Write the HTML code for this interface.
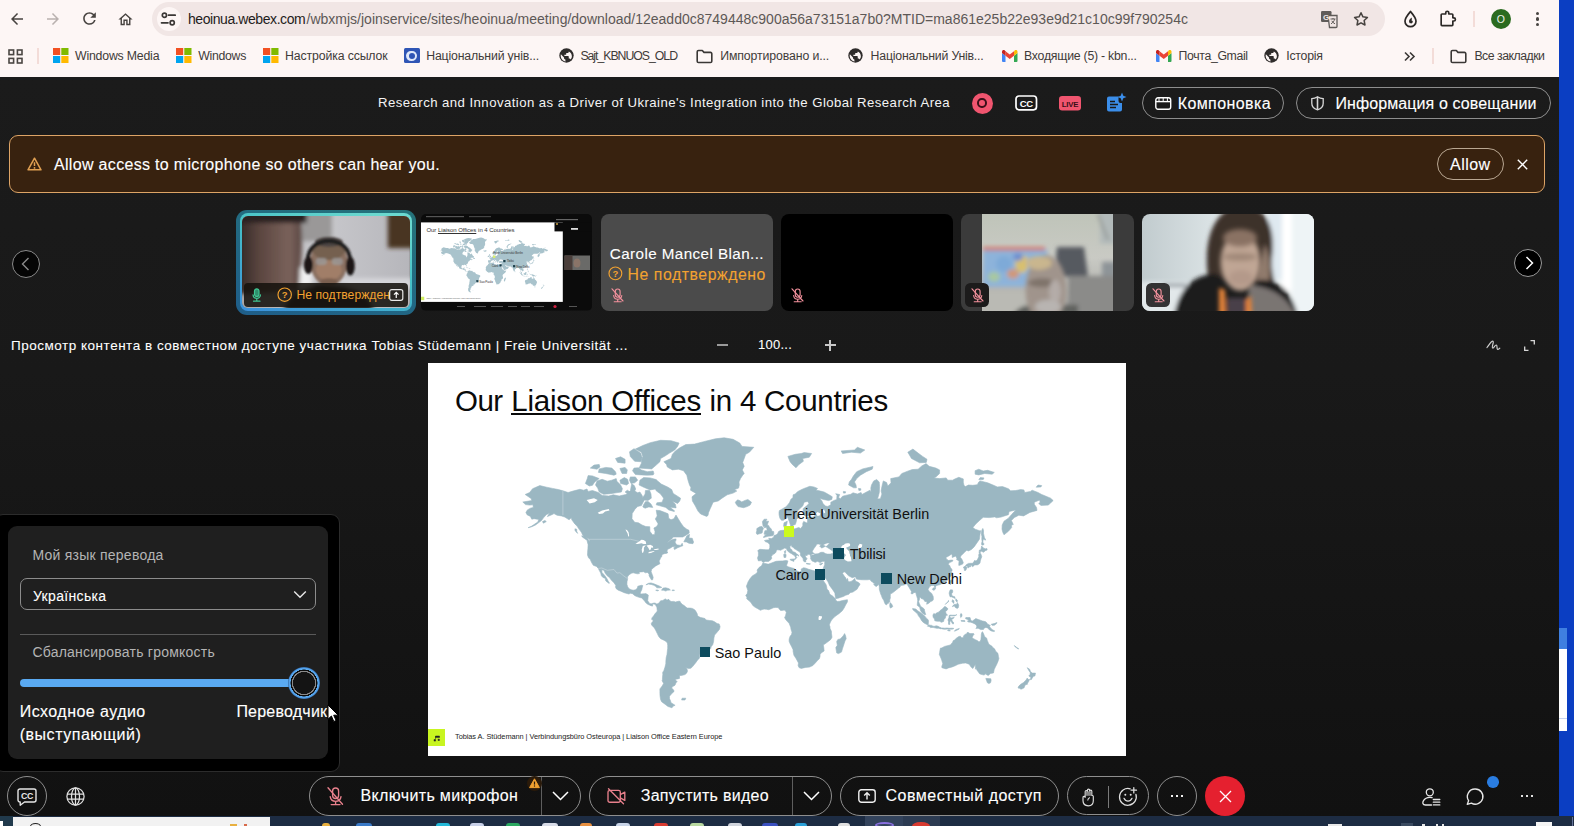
<!DOCTYPE html><html lang="ru"><head><meta charset="utf-8"><title>Webex</title><style>
*{box-sizing:border-box;margin:0;padding:0}
html,body{width:1574px;height:826px;overflow:hidden;background:#0a3bbd;font-family:"Liberation Sans",sans-serif;}
.abs{position:absolute}
.t{position:absolute;white-space:nowrap;display:block}
#root{position:absolute;left:0;top:0;width:1574px;height:826px;overflow:hidden}
svg{position:absolute;overflow:visible}
</style></head><body><div id="root"><div class="abs" style="left:1559px;top:0;width:15px;height:826px;background:#0b3ec2"></div><div class="abs" style="left:1559px;top:628px;width:8px;height:103px;background:#fff"></div><div class="abs" style="left:1559px;top:628px;width:8px;height:21px;background:#3f7fe0"></div><div class="abs" style="left:1559px;top:718px;width:8px;height:1px;background:#c8d4f0"></div><div class="abs" style="left:0;top:0;width:1559px;height:77px;background:#fdf6f5"></div><svg style="left:8.4px;top:10.0px" width="18" height="18" viewBox="0 0 24 24"><path d="M20 11H7.83l5.59-5.59L12 4l-8 8 8 8 1.41-1.41L7.83 13H20v-2z" fill="#474340" /></svg><svg style="left:44.0px;top:10.0px" width="18" height="18" viewBox="0 0 24 24"><path d="M12 4l-1.41 1.41L16.17 11H4v2h12.17l-5.58 5.59L12 20l8-8z" fill="#b9b1af" /></svg><svg style="left:79.5px;top:9.3px" width="19" height="19" viewBox="0 0 24 24"><path d="M17.65 6.35A7.958 7.958 0 0012 4c-4.42 0-7.99 3.58-7.99 8s3.57 8 7.99 8c3.73 0 6.84-2.55 7.73-6h-2.08A5.99 5.99 0 0112 18c-3.31 0-6-2.69-6-6s2.69-6 6-6c1.66 0 3.14.69 4.22 1.78L13 11h7V4l-2.35 2.35z" fill="#474340" /></svg><svg style="left:116.7px;top:10.5px" width="17" height="17" viewBox="0 0 24 24"><path d="M12 5.69l5 4.5V18h-2v-6H9v6H7v-7.81l5-4.5M12 3L2 12h3v8h6v-6h2v6h6v-8h3L12 3z" fill="#474340" /></svg><div class="abs" style="left:152px;top:2px;width:1233px;height:34px;border-radius:17px;background:#f1e6e5"></div><div class="abs" style="left:156.5px;top:7px;width:24px;height:24px;border-radius:12px;background:#fdf6f5"></div><svg style="left:160px;top:11px" width="17" height="16" viewBox="0 0 17 16"><g stroke="#3b3836" stroke-width="1.7" fill="none" stroke-linecap="round"><path d="M8.500 4.200H15.200M1.500 11.800H8"/><circle cx="4.400" cy="4.200" r="2.100"/><circle cx="12.200" cy="11.800" r="2.100"/></g></svg><span id="t1" class="t" style="left:188.0px;top:9.2px;font-size:14px;line-height:20px;color:#1f1c1b;font-weight:400;letter-spacing:-0.426px;">heoinua.webex.com</span><span id="t2" class="t" style="left:306.5px;top:9.2px;font-size:14px;line-height:20px;color:#5d5856;font-weight:400;letter-spacing:0.006px;">/wbxmjs/joinservice/sites/heoinua/meeting/download/12eadd0c8749448c900a56a73151a7b0?MTID=ma861e25b22e93e9d21c10c99f790254c</span><svg style="left:1321px;top:11px" width="17" height="17" viewBox="0 0 17 17"><rect x="0" y="0" width="10.5" height="11" rx="1.2" fill="#5f5b59"/><path d="M7 4.5H16V15.5a1 1 0 0 1-1 1H8.5z" fill="#f1e6e5" stroke="#5f5b59" stroke-width="1.3"/><text x="5.2" y="8.6" font-size="8" font-weight="700" fill="#f1e6e5" text-anchor="middle" font-family="Liberation Sans, sans-serif">G</text><path d="M9.5 8h5M12 7v1.2M13.6 8.2c-.4 2-1.8 3.6-3.6 4.6M10.8 9.8c.6 1.4 1.8 2.4 3.2 3" stroke="#5f5b59" stroke-width="1" fill="none"/></svg><svg style="left:1352px;top:10px" width="18" height="18" viewBox="0 0 24 24"><path d="M12 3.6l2.6 5.5 6 .8-4.4 4.1 1.1 6-5.3-2.9-5.3 2.9 1.1-6L3.4 9.9l6-.8z" fill="none" stroke="#474340" stroke-width="2" stroke-linejoin="round"/></svg><svg style="left:1402px;top:10px" width="17" height="19" viewBox="0 0 17 19"><path d="M8.5 1.5C11.5 5 14 7.8 14 11.2a5.5 5.5 0 0 1-11 0C3 7.8 5.5 5 8.5 1.5z" fill="none" stroke="#2b2826" stroke-width="1.7" stroke-linejoin="round"/><path d="M9.6 7.5c-2 1.6-3 3-2.4 4.7.5 1.3 2.3 1.6 3.2.6.9-1 .3-2.300-.9-2.2.5-1 .4-2 .1-3.100z" fill="#2b2826"/></svg><svg style="left:1437px;top:9px" width="20" height="20" viewBox="0 0 24 24"><path d="M10.500 4.500a1.800 1.800 0 0 1 3.600 0V6H18a1 1 0 0 1 1 1v3.600h1.200a1.900 1.900 0 0 1 0 3.800H19V19a1 1 0 0 1-1 1H6a1 1 0 0 1-1-1V7a1 1 0 0 1 1-1h4.500z" fill="none" stroke="#2b2826" stroke-width="2" stroke-linejoin="round"/></svg><div class="abs" style="left:1473px;top:11px;width:2px;height:16px;background:#f3dcd8"></div><div class="abs" style="left:1491px;top:9px;width:20px;height:20px;border-radius:10px;background:#2b6b1f"></div><span id="t3" class="t" style="left:1496.8px;top:11.8px;font-size:10.5px;line-height:15px;color:#eef2ec;font-weight:400;letter-spacing:0.228px;">O</span><div class="abs" style="left:1536px;top:11.7px;width:3.200px;height:3.200px;border-radius:2px;background:#474340"></div><div class="abs" style="left:1536px;top:17.4px;width:3.200px;height:3.200px;border-radius:2px;background:#474340"></div><div class="abs" style="left:1536px;top:23.1px;width:3.200px;height:3.200px;border-radius:2px;background:#474340"></div><svg style="left:7.600px;top:48.700px" width="15" height="15" viewBox="0 0 15 15"><g fill="none" stroke="#4a4643" stroke-width="1.6"><rect x="1" y="1" width="4.600" height="4.600"/><rect x="9.400" y="1" width="4.600" height="4.600"/><rect x="1" y="9.400" width="4.600" height="4.600"/><rect x="9.400" y="9.400" width="4.600" height="4.600"/></g></svg><div class="abs" style="left:37px;top:48px;width:1.500px;height:16px;background:#f3dcd8"></div><svg style="left:52.6px;top:48.300px" width="15.500" height="15" viewBox="0 0 15.500 15"><rect width="7.200" height="7" fill="#f25022"/><rect x="8.300" width="7.200" height="7" fill="#7fba00"/><rect y="8" width="7.200" height="7" fill="#00a4ef"/><rect x="8.300" y="8" width="7.200" height="7" fill="#ffb900"/></svg><span id="t4" class="t" style="left:75.0px;top:48.1px;font-size:12.3px;line-height:17px;color:#3f3b39;font-weight:400;letter-spacing:-0.193px;">Windows Media</span><svg style="left:175.9px;top:48.300px" width="15.500" height="15" viewBox="0 0 15.500 15"><rect width="7.200" height="7" fill="#f25022"/><rect x="8.300" width="7.200" height="7" fill="#7fba00"/><rect y="8" width="7.200" height="7" fill="#00a4ef"/><rect x="8.300" y="8" width="7.200" height="7" fill="#ffb900"/></svg><span id="t5" class="t" style="left:198.2px;top:48.1px;font-size:12.3px;line-height:17px;color:#3f3b39;font-weight:400;letter-spacing:-0.299px;">Windows</span><svg style="left:263.2px;top:48.300px" width="15.500" height="15" viewBox="0 0 15.500 15"><rect width="7.200" height="7" fill="#f25022"/><rect x="8.300" width="7.200" height="7" fill="#7fba00"/><rect y="8" width="7.200" height="7" fill="#00a4ef"/><rect x="8.300" y="8" width="7.200" height="7" fill="#ffb900"/></svg><span id="t6" class="t" style="left:285.1px;top:48.1px;font-size:12.3px;line-height:17px;color:#3f3b39;font-weight:400;letter-spacing:-0.139px;">Настройка ссылок</span><div class="abs" style="left:403.800px;top:48.300px;width:16px;height:15.200px;background:#2f55b5;border-radius:1.500px"></div><div class="abs" style="left:406.300px;top:50.600px;width:11px;height:10.600px;border-radius:5.500px 5.500px 6px 6px;background:#dfe8fa"></div><div class="abs" style="left:409px;top:53px;width:5.600px;height:5.600px;border-radius:3px;background:#2f55b5"></div><span id="t7" class="t" style="left:426.2px;top:48.1px;font-size:12.3px;line-height:17px;color:#3f3b39;font-weight:400;letter-spacing:-0.158px;">Національний унів...</span><svg style="left:558.5px;top:48.400px" width="15" height="15" viewBox="0 0 24 24"><circle cx="12" cy="12" r="11.500" fill="#2f2c2b"/><path d="M10.500 21.400c-4.400-.7-7.800-4.600-7.800-9.200 0-.8.100-1.500.3-2.200L8 15v1c0 1.100.9 2 2 2zM18.500 18.300c-.3-.800-1-1.400-1.900-1.400h-1v-3c0-.5-.4-1-1-1h-6v-2h2c.5 0 1-.4 1-1V8h2c1.100 0 2-.9 2-2v-.4c2.900 1.200 5 4.100 5 7.400 0 2-.8 3.900-2.100 5.300z" fill="#fdf6f5"/></svg><span id="t8" class="t" style="left:580.4px;top:48.1px;font-size:12.3px;line-height:17px;color:#3f3b39;font-weight:400;letter-spacing:-1.033px;">Sajt_KBNUOS_OLD</span><svg style="left:695.5px;top:48.500px" width="17" height="15" viewBox="0 0 17 15"><path d="M1.200 2.800a1.300 1.300 0 0 1 1.300-1.300h3.800l1.700 1.900h6.500a1.300 1.300 0 0 1 1.300 1.300v7.500a1.300 1.300 0 0 1-1.300 1.300h-12a1.300 1.300 0 0 1-1.300-1.300z" fill="none" stroke="#3a3735" stroke-width="1.600" stroke-linejoin="round"/></svg><span id="t9" class="t" style="left:720.2px;top:48.1px;font-size:12.3px;line-height:17px;color:#3f3b39;font-weight:400;letter-spacing:-0.108px;">Импортировано и...</span><svg style="left:848.3px;top:48.400px" width="15" height="15" viewBox="0 0 24 24"><circle cx="12" cy="12" r="11.500" fill="#2f2c2b"/><path d="M10.500 21.400c-4.400-.7-7.800-4.600-7.800-9.200 0-.8.100-1.500.3-2.200L8 15v1c0 1.100.9 2 2 2zM18.500 18.300c-.3-.800-1-1.400-1.900-1.400h-1v-3c0-.5-.4-1-1-1h-6v-2h2c.5 0 1-.4 1-1V8h2c1.100 0 2-.9 2-2v-.4c2.900 1.200 5 4.100 5 7.400 0 2-.8 3.900-2.100 5.300z" fill="#fdf6f5"/></svg><span id="t10" class="t" style="left:870.6px;top:48.1px;font-size:12.3px;line-height:17px;color:#3f3b39;font-weight:400;letter-spacing:-0.208px;">Національний Унів...</span><svg style="left:1002.2px;top:50px" width="15.500" height="12" viewBox="0 0 31 24"><path d="M2 24h5V11.500L0 6v16a2 2 0 0 0 2 2z" fill="#4285f4"/><path d="M24 24h5a2 2 0 0 0 2-2V6l-7 5.500z" fill="#34a853"/><path d="M24 2.500v9L31 6V3.300c0-2.700-3-4.200-5.200-2.600z" fill="#fbbc04"/><path d="M7 11.500v-9l8.500 6.400L24 2.500v9l-8.500 6.400z" fill="#ea4335"/><path d="M0 3.300V6l7 5.500v-9L5.200.7C3-.9 0 .6 0 3.300z" fill="#c5221f"/></svg><span id="t11" class="t" style="left:1024.0px;top:48.1px;font-size:12.3px;line-height:17px;color:#3f3b39;font-weight:400;letter-spacing:-0.241px;">Входящие (5) - kbn...</span><svg style="left:1155.6px;top:50px" width="15.500" height="12" viewBox="0 0 31 24"><path d="M2 24h5V11.500L0 6v16a2 2 0 0 0 2 2z" fill="#4285f4"/><path d="M24 24h5a2 2 0 0 0 2-2V6l-7 5.500z" fill="#34a853"/><path d="M24 2.500v9L31 6V3.300c0-2.700-3-4.200-5.200-2.600z" fill="#fbbc04"/><path d="M7 11.500v-9l8.500 6.400L24 2.500v9l-8.500 6.400z" fill="#ea4335"/><path d="M0 3.300V6l7 5.500v-9L5.200.7C3-.9 0 .6 0 3.300z" fill="#c5221f"/></svg><span id="t12" class="t" style="left:1178.6px;top:48.1px;font-size:12.3px;line-height:17px;color:#3f3b39;font-weight:400;letter-spacing:-0.364px;">Почта_Gmail</span><svg style="left:1264.2px;top:48.400px" width="15" height="15" viewBox="0 0 24 24"><circle cx="12" cy="12" r="11.500" fill="#2f2c2b"/><path d="M10.500 21.400c-4.400-.7-7.800-4.600-7.800-9.200 0-.8.100-1.500.3-2.200L8 15v1c0 1.100.9 2 2 2zM18.500 18.300c-.3-.800-1-1.400-1.900-1.400h-1v-3c0-.5-.4-1-1-1h-6v-2h2c.5 0 1-.4 1-1V8h2c1.100 0 2-.9 2-2v-.4c2.900 1.200 5 4.100 5 7.400 0 2-.8 3.900-2.100 5.300z" fill="#fdf6f5"/></svg><span id="t13" class="t" style="left:1286.3px;top:48.1px;font-size:12.3px;line-height:17px;color:#3f3b39;font-weight:400;letter-spacing:-0.249px;">Історія</span><svg style="left:1404px;top:50.500px" width="11" height="11" viewBox="0 0 11 11"><path d="M1 1.500l4 4-4 4M6 1.500l4 4-4 4" fill="none" stroke="#3a3735" stroke-width="1.600"/></svg><div class="abs" style="left:1432px;top:48px;width:1.500px;height:16px;background:#f3dcd8"></div><svg style="left:1449.5px;top:48.500px" width="17" height="15" viewBox="0 0 17 15"><path d="M1.200 2.800a1.300 1.300 0 0 1 1.300-1.300h3.800l1.700 1.900h6.500a1.300 1.300 0 0 1 1.300 1.300v7.500a1.300 1.300 0 0 1-1.300 1.300h-12a1.300 1.300 0 0 1-1.300-1.300z" fill="none" stroke="#3a3735" stroke-width="1.600" stroke-linejoin="round"/></svg><span id="t14" class="t" style="left:1474.4px;top:48.1px;font-size:12.3px;line-height:17px;color:#3f3b39;font-weight:400;letter-spacing:-0.496px;">Все закладки</span><div class="abs" style="left:0;top:77px;width:1559px;height:739px;background:linear-gradient(#1b1b1b,#191919 40%,#111 100%)"></div><span id="t15" class="t" style="left:378.0px;top:94.0px;font-size:13.2px;line-height:18px;color:#f4f4f4;font-weight:400;letter-spacing:0.439px;">Research and Innovation as a Driver of Ukraine&#x27;s Integration into the Global Research Area</span><div class="abs" style="left:971.5px;top:92.5px;width:21.0px;height:21.0px;border-radius:50%;background:#f0556f"></div><div class="abs" style="left:977.3px;top:98.3px;width:9.4px;height:9.4px;border-radius:50%;border:2.300px solid #3b0f18"></div><svg style="left:1015.0px;top:95.0px;" width="22.5" height="16" viewBox="0 0 22.5 16"><rect x="1" y="1" width="20.500" height="13.800" rx="3" fill="none" stroke="#fff" stroke-width="1.700"/><text x="11.250" y="11.600" font-size="9.500" font-weight="700" fill="#fff" text-anchor="middle" font-family="Liberation Sans, sans-serif" letter-spacing="-0.300">CC</text></svg><svg style="left:1059.0px;top:96.0px;" width="22" height="14.5" viewBox="0 0 22 14.5"><rect width="22" height="14.500" rx="3.200" fill="#f0556f"/><text x="11" y="10.600" font-size="7.800" font-weight="700" fill="#3b0f18" text-anchor="middle" font-family="Liberation Sans, sans-serif" letter-spacing="-0.200">LIVE</text></svg><svg style="left:1105.5px;top:91.5px;" width="21" height="20" viewBox="0 0 21 20"><path d="M1 6.500a2 2 0 0 1 2-2h9.500v4.500a2 2 0 0 0 2 2h1.500v6.500a2 2 0 0 1-2 2H3a2 2 0 0 1-2-2z" fill="#3b8eea"/><path d="M16 0.500l1.300 3.200 3.200 1.300-3.200 1.300L16 9.500l-1.300-3.200-3.200-1.300 3.200-1.300z" fill="#3b8eea"/><path d="M4 9.500h5M4 12.500h8M4 15.500h6" stroke="#1a1a1a" stroke-width="1.300"/></svg><div class="abs" style="left:1142.0px;top:87.0px;width:141.5px;height:32.0px;border-radius:16px;border:1px solid #8e8e8e"></div><svg style="left:1154.5px;top:96.5px;" width="16.5" height="13" viewBox="0 0 16.5 13"><rect x="0.800" y="0.800" width="14.900" height="11.400" rx="2.200" fill="none" stroke="#fff" stroke-width="1.400"/><path d="M0.800 4.600H15.700" stroke="#fff" stroke-width="1.400"/><path d="M4 0.800v3.500M8.200 0.800v3.500M12.400 0.800v3.500" stroke="#fff" stroke-width="1"/></svg><span id="t16" class="t" style="left:1177.7px;top:92.7px;font-size:16px;line-height:22px;color:#ffffff;font-weight:400;letter-spacing:0.403px;-webkit-text-stroke:0.120px currentColor;">Компоновка</span><div class="abs" style="left:1296.0px;top:87.0px;width:255.0px;height:32.0px;border-radius:16px;border:1px solid #8e8e8e"></div><svg style="left:1310.5px;top:96.3px;" width="13" height="14.5" viewBox="0 0 13 14.5"><path d="M6.500 0.800C8.300 2 10.300 2.600 12.200 2.700v4.600c0 3.300-2.400 5.600-5.700 6.600C3.200 12.900 0.800 10.600 0.800 7.300V2.700C2.700 2.600 4.700 2 6.500 0.800z" fill="none" stroke="#d8d8d8" stroke-width="1.300"/><path d="M6.500 1v12.500" stroke="#d8d8d8" stroke-width="1.600"/></svg><span id="t17" class="t" style="left:1335.4px;top:92.7px;font-size:16px;line-height:22px;color:#ffffff;font-weight:400;letter-spacing:0.103px;-webkit-text-stroke:0.120px currentColor;">Информация о совещании</span><div class="abs" style="left:9.0px;top:135.0px;width:1536.0px;height:58.0px;border-radius:9px;border:1.200px solid #dda466;background:#38220f"></div><svg style="left:26.5px;top:157.0px;" width="15" height="14" viewBox="0 0 15 14"><path d="M7.500 1.200L14 12.800H1z" fill="none" stroke="#e0a052" stroke-width="1.500" stroke-linejoin="round"/><path d="M7.500 5.200v3.800" stroke="#e0a052" stroke-width="1.500"/><circle cx="7.500" cy="10.900" r="0.900" fill="#e0a052"/></svg><span id="t18" class="t" style="left:54.0px;top:154.0px;font-size:16px;line-height:22px;color:#ffffff;font-weight:400;letter-spacing:0.320px;-webkit-text-stroke:0.120px currentColor;">Allow access to microphone so others can hear you.</span><div class="abs" style="left:1437.0px;top:148.0px;width:67.0px;height:32.0px;border-radius:16px;border:1px solid #b9a792"></div><span id="t19" class="t" style="left:1450.0px;top:154.0px;font-size:16px;line-height:22px;color:#ffffff;font-weight:400;letter-spacing:0.471px;-webkit-text-stroke:0.120px currentColor;">Allow</span><svg style="left:1516.5px;top:158.5px;" width="11" height="11" viewBox="0 0 11 11"><path d="M0.800 0.800l9.400 9.400M10.200 0.800l-9.400 9.400" stroke="#fff" stroke-width="1.400"/></svg><div class="abs" style="left:12.3px;top:249.7px;width:28.0px;height:28.0px;border-radius:50%;border:1px solid #8a8a8a;background:#050505"></div><svg style="left:21.0px;top:256.5px;" width="9" height="14" viewBox="0 0 9 14"><path d="M7.500 1L1.500 7l6 6" fill="none" stroke="#8a8a8a" stroke-width="1.400"/></svg><div class="abs" style="left:1514.0px;top:249.0px;width:28.0px;height:28.0px;border-radius:50%;border:1px solid #9a9a9a;background:#000"></div><svg style="left:1524.5px;top:256.0px;" width="9" height="14" viewBox="0 0 9 14"><path d="M1.500 1l6 6-6 6" fill="none" stroke="#fff" stroke-width="1.500"/></svg><div class="abs" style="left:236.2px;top:209.8px;width:180.0px;height:105.2px;border-radius:11px;background:linear-gradient(200deg,#25737a,#1f5e8a)"></div><div class="abs" style="left:239.8px;top:213.4px;width:172.6px;height:97.8px;border-radius:8px;background:linear-gradient(200deg,#6ad8cf 10%,#45c0c6 45%,#3a8fdc 100%)"></div><div class="abs" style="left:242.200px;top:216.200px;width:167.700px;height:92.200px;border-radius:6px;overflow:hidden;background:#777"><svg style="left:0;top:0" width="167.700" height="92.200" viewBox="0 0 168 92" preserveAspectRatio="none"><defs><filter id="b1" x="-20%" y="-20%" width="140%" height="140%"><feGaussianBlur stdDeviation="2.200"/></filter><filter id="b1s"><feGaussianBlur stdDeviation="1"/></filter>
<linearGradient id="w1" x1="0" x2="1"><stop offset="0" stop-color="#a9a6a6"/><stop offset=".45" stop-color="#c9c9cd"/><stop offset="1" stop-color="#b6b6bb"/></linearGradient>
<linearGradient id="c1" x1="0" x2="1"><stop offset="0" stop-color="#2f2624"/><stop offset=".35" stop-color="#5b4640"/><stop offset=".8" stop-color="#7a625b"/><stop offset="1" stop-color="#5a4742"/></linearGradient></defs>
<rect width="168" height="92" fill="url(#w1)"/>
<g filter="url(#b1)">
<rect x="60" y="-5" width="30" height="30" fill="#9a9898"/>
<path d="M-5 -5H58C62 20 60 45 56 75L-5 78z" fill="url(#c1)"/>
<rect x="-5" y="-5" width="70" height="12" fill="#2a2220"/>
<rect x="146" y="-6" width="30" height="38" fill="#4a3524"/>
<rect x="90" y="62" width="80" height="10" fill="#d6d6da"/>
<rect x="58" y="52" width="12" height="20" fill="#f0f0f0"/>
<path d="M40 100C45 75 65 68 87 68s40 8 48 32z" fill="#2a2624"/>
</g>
<g filter="url(#b1s)">
<ellipse cx="87" cy="46" rx="18.500" ry="24" fill="#8a6f60"/>
<ellipse cx="87" cy="33" rx="16.500" ry="11" fill="#75604f"/>
<ellipse cx="87" cy="26" rx="14" ry="5" fill="#4c4543"/>
<ellipse cx="87" cy="54" rx="13" ry="10" fill="#a17e67"/>
<ellipse cx="87" cy="66" rx="9" ry="4" fill="#7a5f50"/>
<path d="M66 46C64 18 110 18 108 46" fill="none" stroke="#1c1a1a" stroke-width="4"/>
<ellipse cx="66.500" cy="49" rx="4.500" ry="9" fill="#1a1818"/><ellipse cx="108.500" cy="50" rx="4.500" ry="9.500" fill="#1a1818"/>
<rect x="74" y="42" width="11" height="7" rx="3" fill="#9c9a98" opacity=".8"/><rect x="90" y="42" width="11" height="7" rx="3" fill="#9c9a98" opacity=".8"/>
</g></svg></div><div class="abs" style="left:244.0px;top:283.2px;width:164.3px;height:23.8px;border-radius:4px;background:rgba(22,18,14,.880)"></div><svg style="left:251.5px;top:288.3px;" width="9.5" height="14" viewBox="0 0 9.5 14"><g fill="none" stroke="#3fc592" stroke-width="1.200" stroke-linecap="round"><rect x="2.500" y="0.800" width="4.500" height="7.600" rx="2.250" fill="#2f8f6c"/><path d="M1 6.800c.200 2.200 1.700 3.600 3.750 3.600S8.300 9 8.500 6.800M4.750 10.400v2.400M1.500 13.200h6.500"/></g></svg><svg style="left:277.2px;top:287.1px;" width="15.4" height="15.4" viewBox="0 0 15.4 15.4"><circle cx="7.7" cy="7.7" r="6.7" fill="none" stroke="#f2a230" stroke-width="1.150"/><text x="7.7" y="11.120000000000001" font-size="9.5" font-weight="700" fill="#f2a230" text-anchor="middle" font-family="Liberation Sans, sans-serif">?</text></svg><div class="abs" style="left:296.400px;top:285px;width:96px;height:20px;overflow:hidden"><span id="t20" class="t" style="left:0.0px;top:1.5px;font-size:12.2px;line-height:17px;color:#f2a230;font-weight:400;letter-spacing:0.012px;">Не подтверждено</span></div><svg style="left:389.0px;top:289.0px;" width="14.5" height="12" viewBox="0 0 14.5 12"><rect x="0.700" y="0.700" width="13.100" height="10.600" rx="2" fill="#2a2623" stroke="#e8e8e8" stroke-width="1.200"/><path d="M7.250 9V3.600M5 5.600l2.250-2.300 2.250 2.300" fill="none" stroke="#fff" stroke-width="1.200"/></svg><div class="abs" style="left:420.800px;top:214px;width:171.500px;height:96.500px;border-radius:5px;overflow:hidden"><svg style="left:0;top:0" width="171.500" height="96.500" viewBox="0 0 171.500 96.500"><rect width="171.500" height="96.500" fill="#0b0b0b"/><rect x="0" y="8.400" width="141.800" height="79.500" fill="#fff"/><g transform="translate(0 8.400) scale(0.20315)"><path d="M94.8 139.0L103.8 137.6L103.1 135.5L97.2 131.5L101.6 129.5L104.6 125.7L111.8 122.6L118.6 124.2L124.6 125.4L130.5 126.6L134.9 127.8L140.1 129.5L146.0 127.8L151.9 126.3L155.6 127.2L159.0 126.0L160.1 128.4L164.5 127.5L170.4 129.5L174.1 132.4L180.8 133.0L185.2 131.8L191.2 133.0L197.8 131.5L200.0 130.1L202.3 128.1L203.7 120.8L206.3 122.6L207.7 126.0L206.7 128.1L209.7 129.8L211.9 129.0L214.1 132.4L214.8 134.4L217.1 131.0L217.4 127.5L221.5 127.2L223.0 131.0L223.3 135.2L220.0 137.4L216.3 137.1L214.8 139.8L213.4 142.6L209.7 143.4L207.0 146.2L204.2 150.6L204.0 155.7L206.7 159.3L210.4 159.8L214.0 162.0L217.8 163.5L221.8 163.7L221.9 168.3L224.5 171.8L226.7 171.4L227.0 168.5L225.9 165.0L228.6 163.5L230.2 160.9L227.3 155.9L229.2 152.9L228.2 147.2L231.9 147.6L237.8 149.8L240.1 150.8L240.7 155.2L243.0 156.8L245.9 155.7L248.0 152.0L249.9 155.2L252.7 159.8L255.5 163.7L258.8 166.2L261.0 167.3L261.2 170.0L259.2 171.6L254.8 174.0L249.6 174.0L245.2 174.0L244.0 175.7L241.0 177.7L238.8 180.2L242.2 177.5L245.9 176.1L248.1 175.9L247.7 178.3L246.7 178.6L248.4 181.5L249.6 182.0L252.6 182.4L254.2 180.2L254.8 182.8L253.3 183.3L249.6 184.8L246.5 186.6L245.8 184.8L248.1 183.5L244.4 183.7L242.5 185.0L239.7 186.3L238.8 188.4L240.0 189.3L239.0 190.2L236.3 190.7L234.1 191.6L233.6 193.9L232.6 194.7L232.0 196.4L231.1 197.9L231.9 200.8L229.6 201.9L227.4 203.2L225.3 204.9L223.7 206.2L223.1 208.7L224.3 211.7L225.2 214.4L224.6 216.8L223.6 217.0L222.2 214.8L221.1 212.8L221.1 210.9L219.3 209.4L217.4 209.8L215.6 208.7L213.4 208.9L211.1 209.0L211.4 210.6L209.2 210.8L205.2 209.8L203.4 210.3L200.8 212.0L199.4 214.1L199.7 215.8L199.0 218.7L198.9 221.2L199.7 223.9L201.4 225.9L203.3 226.8L205.2 227.2L207.7 226.8L209.4 225.0L209.8 223.2L213.4 222.3L214.8 222.6L214.2 224.7L213.7 226.9L213.1 227.9L212.0 230.6L213.4 230.9L216.3 230.7L217.8 230.6L220.3 232.0L220.0 234.9L219.7 237.8L220.8 239.3L221.9 240.7L223.7 240.7L225.5 240.1L227.0 240.0L228.9 241.1L228.3 243.3L227.7 242.1L225.9 240.8L224.5 241.8L224.6 243.1L223.0 242.7L220.9 241.8L220.0 241.4L217.8 239.8L216.6 238.0L215.1 236.4L213.8 234.9L211.9 234.6L208.9 233.6L207.0 232.8L204.5 230.7L202.6 230.3L200.8 231.0L196.2 229.7L192.9 228.2L190.3 227.2L188.2 225.7L187.5 223.9L187.8 222.4L186.1 219.9L183.3 217.1L181.4 214.5L178.9 212.5L177.1 210.1L175.9 207.3L173.7 206.8L174.0 209.4L176.7 212.5L178.9 215.6L180.2 218.2L181.5 220.2L180.8 220.3L177.8 217.9L177.1 215.3L174.9 214.4L173.4 212.8L172.7 210.1L171.6 208.1L170.3 205.4L168.5 203.4L165.3 202.3L163.6 199.6L162.3 196.6L160.5 194.7L159.5 192.1L159.6 189.3L159.9 185.7L160.1 181.7L159.0 177.5L161.6 177.9L162.3 179.6L161.3 176.3L158.6 174.4L154.9 172.4L153.4 169.3L150.6 165.6L149.0 163.0L146.8 160.9L143.8 156.8L143.2 154.8L141.1 156.8L136.8 154.1L133.4 152.9L129.0 152.2L126.0 150.6L123.8 151.7L119.4 153.6L121.6 150.1L118.2 151.7L115.7 154.6L113.5 157.5L110.5 159.8L107.5 162.0L103.8 163.7L100.1 164.7L103.1 163.5L105.3 162.0L109.8 159.1L110.8 156.4L106.1 155.7L103.8 156.2L102.4 153.4L99.0 151.7L97.9 149.4L99.4 146.9L102.4 145.2L105.3 144.4L105.0 141.8L101.6 142.1L97.5 141.6ZM278.6 153.4L272.6 151.0L270.0 148.1L267.4 143.1L264.4 137.9L264.0 133.8L268.1 130.4L262.5 127.2L262.9 124.5L261.5 122.0L260.0 117.2L258.8 112.2L255.5 107.7L250.4 106.2L244.4 106.9L239.3 104.0L238.5 101.4L235.9 98.7L243.0 95.5L244.4 91.3L247.4 87.9L251.8 84.8L257.8 81.6L266.6 81.1L275.5 78.7L287.4 75.8L296.2 74.8L305.1 76.3L311.8 80.1L314.0 83.4L325.8 84.3L321.4 89.2L317.7 91.3L316.2 95.5L314.7 99.4L316.2 103.3L314.3 106.9L316.2 110.5L314.7 112.2L312.5 115.6L311.0 118.9L311.3 122.0L310.6 125.1L306.6 126.6L308.8 128.1L305.1 130.1L299.2 131.8L294.0 135.2L290.3 137.9L285.1 139.2L283.7 142.4L282.2 145.7L280.6 149.4L280.0 152.5ZM315.5 144.7L310.0 143.6L308.1 141.1L307.3 139.2L309.6 136.8L312.5 137.9L313.6 139.0L317.0 137.4L319.9 136.5L323.5 139.2L322.1 142.1L319.2 143.6ZM245.9 148.4L240.7 146.9L237.8 144.4L231.1 142.6L228.2 141.8L228.9 139.8L234.1 139.2L235.6 135.2L232.6 131.0L228.2 127.8L227.4 126.0L222.2 126.9L216.3 124.5L211.1 122.0L211.9 117.2L215.6 114.6L222.2 114.9L228.2 116.6L229.6 117.9L233.3 121.1L240.0 124.2L243.7 126.6L245.2 130.4L252.6 135.2L251.8 137.9L249.6 140.5L244.4 138.2L247.4 141.3L248.1 144.9L242.2 144.2L246.7 148.1ZM193.4 129.0L188.2 129.8L182.3 130.7L175.6 131.3L171.2 129.0L169.7 125.1L167.5 122.0L169.0 117.9L174.1 116.3L179.3 118.2L183.8 117.2L188.2 115.6L188.9 118.2L192.6 122.0L194.4 125.7ZM161.3 123.0L157.4 120.5L159.3 115.6L160.1 112.6L164.5 112.9L171.2 115.6L166.7 118.9L164.5 122.3ZM223.7 105.9L211.1 105.1L213.4 100.2L213.4 97.5L214.8 93.4L213.4 89.2L207.4 86.1L214.8 82.5L222.2 79.7L232.6 77.3L243.0 77.7L251.1 80.1L249.6 83.4L246.7 87.0L241.5 90.1L237.0 93.0L232.6 95.5L231.9 98.7L228.2 102.1ZM212.6 98.7L206.7 98.3L202.3 93.4L201.5 88.8L206.0 85.7L212.6 90.1L214.1 94.7ZM225.2 111.9L219.3 112.2L213.4 111.9L207.4 111.5L204.5 107.7L206.0 105.1L210.4 104.8L213.4 106.9L219.3 108.7L225.2 108.0L225.9 110.5ZM203.0 120.5L201.5 117.2L202.3 113.9L207.4 113.9L209.7 117.2L206.7 119.8ZM198.6 122.0L192.6 120.5L191.9 117.2L196.3 114.6L199.6 116.3L200.6 120.5ZM186.0 112.2L177.8 110.5L170.4 109.4L171.2 105.9L177.8 104.4L183.8 105.1L187.5 108.7L188.2 111.2ZM198.6 110.5L194.1 110.5L191.9 105.5L197.1 104.4L199.3 106.9ZM169.0 106.2L162.3 105.1L166.0 102.1L171.2 101.4L171.9 104.0ZM197.1 100.2L189.7 99.4L187.5 95.5L192.6 93.8L197.1 96.3ZM217.1 145.2L214.8 143.9L215.6 141.8L217.4 138.7L220.0 138.4L223.0 141.1L224.8 144.4L220.8 143.9ZM200.0 131.0L197.1 129.0L199.3 127.2L202.3 129.0ZM264.9 180.7L265.6 179.0L264.9 177.3L264.3 175.3L261.0 175.0L261.5 171.2L258.8 173.0L257.3 175.9L255.8 178.8L258.5 179.0L261.0 180.3ZM161.0 177.5L159.0 177.3L156.7 175.7L154.3 174.0L153.7 172.8L157.1 173.4L159.3 175.3ZM149.6 170.4L147.1 167.7L146.9 165.8L148.7 166.2L148.7 168.3ZM115.4 160.2L114.5 158.6L116.9 157.5L118.3 158.6ZM217.9 221.8L220.5 220.3L223.0 219.9L225.9 220.8L228.9 222.1L231.1 222.9L233.8 224.4L231.9 224.8L228.8 224.8L228.0 223.6L225.9 222.3L223.4 221.5L220.5 221.1ZM233.5 227.2L235.0 225.1L237.8 224.8L241.0 225.7L242.4 227.0L239.3 227.3L237.8 228.1L235.6 227.3ZM227.7 227.3L228.9 226.9L230.7 227.5L229.3 227.9ZM244.1 227.6L244.3 226.9L246.4 227.0L246.2 227.6ZM228.9 241.1L231.1 240.0L231.9 238.5L232.9 237.7L234.8 237.4L237.5 235.8L238.1 236.8L240.0 237.1L240.0 236.1L241.5 237.2L243.0 238.5L245.9 238.4L247.4 239.0L250.4 238.3L252.0 238.3L252.6 239.5L254.1 241.3L256.6 242.8L257.5 243.8L259.2 245.0L262.2 245.1L264.4 245.4L266.3 246.5L267.4 247.5L269.2 250.7L269.6 252.8L271.1 253.8L272.6 254.5L274.8 254.9L277.0 255.6L278.0 257.0L281.7 257.5L284.4 257.8L286.6 258.8L289.1 260.6L291.1 260.9L292.1 263.6L291.5 266.3L289.7 268.5L286.6 272.1L285.9 275.0L285.6 278.6L284.7 281.7L283.1 283.8L282.9 285.3L281.4 286.8L279.2 286.8L277.0 287.6L275.1 288.3L272.6 290.2L271.7 291.7L271.4 295.3L269.6 296.9L268.1 299.2L266.5 301.2L264.6 303.6L262.9 305.2L260.4 305.6L258.1 304.7L257.2 304.1L258.9 305.7L259.5 307.9L258.8 309.9L257.0 311.6L253.3 312.5L251.5 312.5L251.5 315.4L249.6 315.9L247.4 316.3L248.1 318.0L249.3 318.6L248.1 319.5L247.0 322.2L244.7 323.5L243.6 325.0L245.5 326.8L246.1 328.4L243.6 330.7L241.5 333.2L241.5 335.6L242.4 337.5L243.0 339.7L247.1 342.3L245.2 343.1L244.0 344.8L240.0 343.5L237.0 341.2L233.6 338.7L232.6 336.6L232.0 332.6L231.9 328.7L231.9 325.9L234.1 323.1L235.6 320.4L234.1 317.7L234.4 316.8L234.5 314.2L234.8 311.6L234.7 309.4L235.9 307.4L237.0 304.1L237.8 300.8L237.9 297.6L238.2 294.5L239.0 291.4L239.3 288.3L239.7 285.3L239.7 282.3L239.4 280.0L237.8 278.3L235.9 277.2L232.6 275.7L230.7 273.5L229.3 270.6L227.9 267.7L226.4 264.9L224.0 262.4L223.6 262.0L223.3 260.2L224.8 258.5L225.2 257.0L223.7 256.6L223.9 254.9L225.1 253.4L226.2 252.1L226.7 251.1L227.9 249.8L229.3 248.1L229.0 245.7L228.8 243.8L228.3 243.3ZM254.1 335.2L257.8 335.2L257.0 337.0L253.6 337.0ZM334.9 200.0L339.3 200.9L340.6 201.1L343.5 200.0L348.0 198.3L351.0 198.1L354.7 197.9L358.1 197.4L359.9 197.9L359.4 200.0L358.5 202.4L360.0 203.7L363.1 204.7L366.1 205.5L368.0 207.4L371.7 208.9L373.3 207.8L373.2 206.0L375.7 204.7L377.9 205.2L380.6 206.3L383.6 207.0L386.5 207.9L387.9 207.4L390.7 207.0L391.4 207.4L391.7 209.4L392.0 210.9L393.5 213.3L394.4 215.6L396.1 218.7L398.1 221.7L398.7 223.9L399.0 226.2L400.6 227.6L401.6 230.6L402.2 231.6L404.3 232.8L406.6 234.9L407.7 235.7L407.5 237.1L409.5 238.5L411.7 238.3L414.6 237.5L419.4 236.7L419.5 238.7L417.6 242.1L416.1 245.0L414.3 247.8L410.9 250.7L406.9 253.5L405.0 255.6L403.5 257.0L402.4 259.2L401.2 262.0L401.9 263.2L402.1 265.6L403.4 268.2L403.5 270.6L404.0 274.2L402.8 276.4L400.6 278.2L398.1 280.1L395.3 282.0L395.8 284.6L396.1 288.0L393.2 289.9L392.1 291.4L392.0 293.7L391.3 295.8L389.5 297.5L387.3 300.0L384.9 302.5L381.6 304.1L377.6 304.4L373.2 305.4L371.0 304.6L370.1 302.5L370.5 300.0L368.8 296.9L367.9 295.3L365.9 292.2L365.1 288.3L365.1 286.7L363.7 283.8L362.1 280.8L361.1 278.2L361.2 276.0L362.0 273.5L363.6 271.3L364.0 269.2L363.0 266.3L362.7 264.2L361.8 262.0L361.1 260.3L359.4 258.5L357.5 256.3L356.6 254.5L357.5 252.9L357.8 251.4L358.3 249.5L357.7 248.0L356.2 247.1L354.0 247.4L352.5 247.4L351.0 245.7L350.1 244.6L347.3 244.4L345.4 244.8L344.3 245.3L342.6 246.0L340.6 246.7L338.4 246.3L336.2 246.1L334.3 246.5L332.4 247.3L329.8 245.7L327.6 244.6L325.4 243.1L324.1 241.4L323.3 240.0L321.5 238.1L319.5 236.5L318.7 235.7L318.9 234.2L317.7 232.5L319.2 230.6L319.8 227.6L319.2 225.6L318.4 223.2L319.3 220.9L320.1 218.8L322.1 215.6L324.5 212.7L327.3 211.2L329.1 209.4L329.4 208.7L329.1 207.0L331.0 204.5L332.4 203.6L333.7 202.6ZM416.6 270.6L417.6 272.8L418.2 275.7L417.0 277.9L416.1 280.8L414.6 285.3L413.5 289.1L410.5 290.6L408.7 289.9L408.3 287.6L407.8 284.6L409.3 282.3L408.7 278.6L409.9 276.4L412.1 276.0L414.0 274.2L415.4 272.5ZM335.3 199.6L334.3 198.8L333.2 197.6L330.4 197.9L329.5 195.1L330.4 192.5L330.4 189.5L329.8 187.5L331.9 186.3L335.5 186.6L338.0 186.8L340.9 186.8L341.8 184.6L341.8 182.6L341.8 181.7L339.9 179.6L337.2 178.6L336.5 177.5L339.2 176.9L341.2 177.1L340.8 175.0L341.8 175.5L343.7 175.5L345.8 174.0L346.1 172.6L348.3 171.8L349.7 170.4L350.6 168.5L352.5 167.5L355.4 167.3L356.5 166.4L356.3 164.5L355.6 163.0L356.0 159.8L359.3 158.2L358.8 160.9L358.1 163.0L358.4 164.5L359.7 165.6L362.1 165.4L363.9 165.8L364.8 166.2L367.7 165.6L370.7 164.5L372.6 165.4L373.9 164.1L374.8 162.6L374.8 160.2L375.7 158.4L378.4 159.8L379.4 159.8L379.6 156.8L378.4 154.8L380.3 154.1L385.0 154.1L387.3 152.9L385.8 151.5L380.6 152.5L377.6 153.2L375.4 151.7L375.4 149.4L375.1 145.7L378.4 143.1L381.0 140.5L379.6 138.4L376.2 139.2L374.7 143.1L371.7 145.7L369.5 148.1L369.2 151.3L371.6 153.4L370.5 154.6L368.6 156.2L368.3 158.6L367.3 161.5L365.4 162.0L364.6 163.3L362.8 163.3L362.4 162.0L361.4 158.6L361.2 158.2L360.0 155.2L359.4 153.2L358.4 155.2L355.4 157.3L353.5 157.3L351.9 155.2L351.1 152.0L351.0 149.4L351.4 147.6L354.7 145.7L357.7 143.9L359.9 141.8L361.7 139.2L362.8 136.5L364.9 134.4L365.1 131.8L367.3 131.0L369.5 128.7L371.7 127.5L375.4 125.7L378.7 124.5L381.8 123.3L385.8 123.9L389.5 125.4L388.0 127.2L390.2 127.5L392.4 128.1L396.1 129.0L400.6 131.5L404.3 133.8L403.8 136.5L400.6 137.6L395.4 136.5L391.7 135.2L393.9 137.9L395.1 140.8L397.6 143.1L399.8 143.4L402.8 141.8L402.8 139.2L406.1 137.4L408.7 136.5L409.0 132.4L407.7 130.7L411.7 131.5L410.6 134.6L412.4 135.7L414.6 133.2L417.6 132.4L422.8 131.3L425.0 129.8L429.4 131.0L433.1 129.5L433.9 131.5L439.1 128.7L442.0 127.2L443.1 129.0L442.8 125.1L443.5 122.0L445.7 117.9L448.7 116.6L451.2 118.9L451.6 123.6L451.3 129.5L450.2 133.8L449.4 136.0L452.4 135.7L453.9 131.0L453.1 128.1L453.9 123.6L454.6 120.5L455.3 117.9L458.6 119.5L459.8 123.0L463.0 119.8L462.7 115.6L470.9 113.9L473.8 110.5L479.0 108.4L484.2 106.6L490.1 106.2L493.8 102.9L498.0 100.6L501.2 103.3L507.9 105.1L511.6 106.9L511.6 110.5L507.9 113.9L505.7 114.9L511.6 115.6L518.2 114.9L519.7 117.2L524.9 117.2L525.6 116.6L530.8 114.3L535.3 115.9L535.3 119.2L536.0 122.6L537.5 123.6L540.4 122.0L544.9 122.3L549.3 121.7L550.8 118.9L552.0 117.9L559.7 119.8L565.6 122.3L569.3 123.9L574.5 123.6L580.4 125.7L582.6 127.8L587.8 127.5L592.7 126.6L595.9 126.9L596.7 129.5L602.6 128.4L604.1 127.2L610.0 129.5L613.7 131.5L617.4 133.0L622.6 135.2L625.2 137.6L623.3 139.2L620.4 142.1L613.0 142.4L610.7 140.5L612.2 139.2L611.5 137.1L606.3 139.2L606.3 141.3L608.5 144.4L609.0 147.4L601.9 149.4L595.6 152.9L590.8 152.2L586.3 154.6L583.4 157.5L585.3 161.5L583.4 162.0L583.7 164.5L580.4 168.3L576.0 171.8L574.8 169.3L574.0 166.2L574.2 162.0L576.0 158.2L580.4 155.2L583.4 151.7L586.3 148.6L587.8 146.9L581.1 148.6L580.4 151.7L573.0 154.1L568.6 154.8L566.8 153.9L561.2 154.6L555.2 154.3L551.5 157.5L547.8 160.9L544.9 164.5L547.1 166.2L551.5 167.7L552.7 167.7L552.0 171.4L551.4 176.3L548.7 180.2L546.1 183.9L543.4 186.6L540.4 187.9L538.8 187.3L537.0 188.8L535.6 190.2L533.0 192.8L532.3 194.2L533.9 196.3L535.3 199.6L534.7 201.1L532.3 202.1L530.8 202.4L530.8 200.4L531.1 197.9L528.6 196.6L528.9 195.4L527.9 193.3L527.4 193.2L524.2 194.5L524.2 191.9L523.4 191.2L521.1 192.8L517.9 194.5L518.5 196.3L519.7 196.8L520.0 197.6L523.3 197.1L525.0 197.3L524.5 198.3L521.6 199.6L520.2 201.3L521.6 202.4L522.5 204.5L524.0 206.6L524.0 208.1L521.9 209.0L524.2 209.4L523.4 212.5L521.2 214.8L519.7 217.1L518.4 218.1L516.3 220.2L513.1 220.9L511.6 221.7L508.6 222.4L507.1 224.2L505.7 222.4L503.7 222.4L501.7 223.6L500.0 226.2L501.2 228.4L503.7 230.4L505.2 233.5L505.4 236.4L504.5 237.8L502.3 238.7L501.2 240.0L498.7 241.3L498.9 239.3L498.1 238.5L496.8 238.4L496.0 237.1L495.0 236.1L493.1 235.4L492.9 234.4L491.6 234.5L491.5 236.4L490.6 238.5L491.3 240.4L491.9 241.6L492.5 243.3L494.7 244.7L496.3 246.0L496.6 247.8L497.2 250.0L497.8 251.5L496.8 251.7L494.9 250.4L493.5 249.2L492.5 247.5L492.0 245.8L491.7 244.3L489.2 242.3L489.4 240.0L489.7 237.8L489.5 235.7L488.8 233.5L488.2 231.6L488.0 229.8L486.0 229.4L484.6 230.9L483.0 230.6L483.5 228.4L482.1 226.2L481.1 224.5L479.8 222.6L479.5 221.2L478.0 220.9L476.1 222.0L474.3 222.3L472.7 222.4L471.9 224.2L470.6 225.0L467.9 227.2L466.9 228.1L464.2 230.1L462.3 231.0L462.3 233.5L462.4 234.8L461.7 237.1L461.9 238.8L461.0 238.8L460.5 240.3L459.3 240.8L458.3 242.0L457.0 240.8L456.4 239.3L455.8 237.4L454.3 235.1L453.3 232.3L452.8 231.3L452.1 229.1L451.3 226.2L451.3 223.6L451.0 222.9L450.9 221.2L448.7 223.2L447.9 223.6L445.7 221.4L447.2 220.5L445.7 220.2L444.5 219.1L443.2 218.2L442.6 217.4L442.0 216.5L439.1 216.8L435.4 216.8L433.1 216.7L430.9 216.5L428.4 216.1L427.7 214.1L426.8 213.9L424.3 214.7L420.6 212.8L418.8 211.1L417.6 209.4L416.0 208.7L415.4 209.4L414.5 210.3L415.4 211.7L416.4 213.3L417.7 214.8L418.3 216.4L418.8 217.6L418.8 216.2L419.4 215.4L420.0 217.1L419.8 218.2L421.3 218.7L422.8 218.4L424.1 217.9L425.4 216.7L426.8 215.4L427.1 216.7L427.7 218.2L430.2 219.3L432.1 220.9L431.4 222.4L430.3 223.9L429.1 226.2L427.1 227.6L424.9 229.1L422.0 229.7L420.9 231.2L417.6 232.3L415.4 233.5L412.4 234.4L410.2 235.2L408.0 235.5L407.5 234.5L407.1 232.3L406.9 230.1L405.8 228.4L404.3 226.2L402.8 224.2L401.5 222.4L400.6 220.2L399.8 218.5L398.4 216.4L396.6 214.1L395.4 212.5L394.8 212.5L395.4 210.1L394.2 212.8L392.4 210.9L391.7 209.4L391.4 207.4L393.2 207.6L394.2 207.3L395.0 206.2L395.5 204.5L396.1 203.1L396.7 201.8L396.6 200.4L396.7 199.3L397.2 198.6L394.8 198.3L392.4 199.5L391.4 199.3L389.0 198.1L388.4 199.1L387.0 199.3L385.3 198.4L384.0 197.9L382.5 195.6L382.8 194.0L382.4 192.8L384.3 192.1L386.5 192.1L386.5 191.1L390.1 190.7L392.9 189.3L395.4 189.3L397.3 190.5L399.1 191.1L402.4 191.1L405.0 190.2L405.2 189.0L404.0 187.5L402.4 186.4L399.5 184.6L397.8 183.5L399.1 183.1L399.8 182.0L401.8 180.0L399.1 180.0L396.7 180.9L395.1 182.0L397.5 183.3L396.0 183.9L393.9 185.0L393.0 184.6L391.7 183.1L393.5 181.8L390.2 180.9L389.0 181.1L387.6 183.3L386.1 185.3L384.9 187.2L384.3 188.4L385.2 190.0L386.5 190.7L386.4 191.1L384.3 191.1L383.3 191.8L382.4 192.6L382.2 191.8L381.9 191.4L379.7 191.2L379.0 192.8L377.5 191.8L377.5 193.7L378.1 194.4L379.1 195.7L378.7 196.4L377.8 197.3L377.8 198.9L376.9 198.9L375.7 198.3L375.1 196.9L375.3 195.9L374.4 194.7L373.3 193.5L372.3 191.9L372.5 190.5L372.0 189.3L371.1 188.6L370.4 188.2L367.9 186.6L366.1 185.5L364.6 183.7L364.9 183.3L364.2 184.3L363.7 183.0L363.9 182.6L361.8 183.1L362.0 184.1L362.1 185.5L363.6 186.4L364.6 188.6L367.4 189.5L368.6 190.9L370.2 191.8L370.8 193.2L369.1 191.9L368.0 193.3L368.9 194.5L368.0 195.6L367.3 196.4L366.7 196.3L367.6 194.7L366.7 192.8L365.1 191.8L364.6 191.4L363.6 190.7L361.8 189.8L360.2 188.6L359.1 187.5L358.8 186.6L358.1 185.5L356.8 185.0L355.0 186.1L354.4 186.3L352.5 187.3L351.4 187.0L349.8 186.8L348.8 187.0L348.0 188.1L348.3 188.8L346.9 190.4L344.8 191.6L343.2 193.7L343.9 195.1L342.6 196.9L340.5 198.4L337.1 198.4ZM335.2 174.2L337.4 172.0L339.2 171.6L336.1 171.2L336.6 168.7L336.9 167.7L339.2 167.5L338.9 166.0L338.4 164.3L336.2 164.7L336.5 163.0L335.2 163.5L334.7 160.9L334.4 158.6L336.2 156.2L339.0 156.2L337.7 158.2L340.6 158.2L339.6 160.9L339.2 162.0L340.6 162.4L341.4 164.1L343.3 166.0L343.7 167.3L344.0 168.3L345.7 168.5L345.8 170.4L345.7 171.6L345.1 172.6L342.9 173.0L340.0 173.2L338.3 173.8L335.9 174.4ZM329.1 171.4L328.2 170.0L328.8 167.7L328.8 165.6L331.8 163.7L334.0 163.5L335.5 165.2L334.6 167.5L334.1 170.0L331.3 170.8ZM366.7 195.9L362.1 196.3L362.4 197.1L365.9 198.4L366.1 197.1ZM357.4 190.7L355.7 191.4L356.0 194.5L357.8 194.4L358.1 191.9ZM357.5 187.5L356.3 188.4L356.9 190.4L357.7 189.3ZM378.5 200.3L378.4 200.9L381.3 201.3L382.5 200.9L380.6 200.6ZM391.4 201.1L392.4 201.9L393.9 201.3L394.8 200.1L392.4 200.8ZM552.7 190.5L553.8 193.7L553.0 195.7L552.3 197.9L552.0 200.1L550.7 201.3L549.2 201.9L546.4 201.9L546.2 202.4L544.6 203.7L543.5 202.4L543.7 201.9L541.2 202.3L539.7 202.9L537.5 203.1L538.2 201.8L540.4 200.4L542.7 200.3L544.6 200.3L545.8 198.8L546.7 197.3L547.1 197.9L548.6 197.6L549.6 196.3L550.8 193.7L550.7 191.8L551.2 190.7ZM551.1 190.4L551.2 188.4L551.4 187.0L552.7 187.0L553.3 185.0L553.6 183.0L555.7 185.2L557.9 185.9L558.6 185.2L559.2 187.0L557.2 187.7L555.7 189.3L553.3 188.2L552.1 188.8L552.3 189.7ZM537.3 203.1L536.3 203.6L535.4 204.2L535.7 205.0L536.3 205.8L536.4 207.4L537.0 207.8L537.9 207.1L538.8 205.2L538.7 204.1ZM542.8 202.6L543.0 203.2L542.2 204.1L541.2 203.7L540.4 204.9L539.1 203.9L540.1 202.9L541.6 202.4ZM553.9 182.2L553.5 180.7L554.1 178.3L553.8 176.3L553.9 173.4L553.3 170.4L553.8 167.3L554.8 165.4L555.5 167.3L555.5 170.4L556.4 174.4L557.2 175.9L557.8 177.1L555.2 176.3L554.8 179.2L556.0 180.9L555.8 181.7ZM523.4 216.7L524.0 217.9L523.1 220.2L522.4 221.8L521.5 220.8L521.3 219.4L522.1 217.9L522.8 217.0ZM507.3 224.5L507.9 224.8L507.0 226.6L505.7 227.3L504.3 226.5L505.2 225.0L506.7 224.5ZM462.1 239.5L463.8 241.3L464.8 243.6L462.9 245.0L462.1 244.8L461.7 242.8L461.9 240.8ZM484.6 245.5L487.9 246.1L489.7 247.8L492.3 249.5L495.0 251.4L497.1 253.5L498.1 254.9L500.2 256.8L500.5 258.2L500.2 261.9L498.4 261.3L496.0 259.9L494.0 258.2L492.8 256.3L492.0 254.8L490.4 252.8L489.7 251.1L487.2 248.8L484.9 246.8ZM499.4 263.2L500.6 261.9L502.0 262.2L503.9 262.4L504.9 263.2L507.1 263.3L507.9 262.7L510.2 263.3L512.0 264.4L512.9 264.6L513.1 265.9L510.8 265.3L508.6 265.3L505.7 264.6L504.2 264.4L502.4 264.6L501.1 263.4ZM516.6 243.6L517.8 243.8L520.0 245.8L519.0 247.4L517.5 248.5L518.1 250.7L519.6 252.1L517.9 252.4L517.4 254.9L516.0 256.6L515.6 258.5L513.4 259.3L511.6 258.3L509.1 258.2L506.8 257.8L506.5 256.1L505.1 254.2L504.9 252.1L505.8 250.5L507.4 251.2L508.3 250.0L510.5 249.2L511.9 247.8L513.1 246.8L514.4 246.0L515.4 244.7ZM528.3 251.4L527.6 252.2L524.2 252.2L522.4 252.1L521.2 252.5L520.9 254.8L519.9 257.0L520.5 258.5L520.5 261.3L521.8 261.5L521.8 259.2L522.7 257.5L523.6 259.2L524.2 260.3L525.0 261.2L525.9 260.0L524.6 258.5L523.4 256.3L524.2 256.2L526.1 254.8L526.2 254.4L523.4 254.9L522.1 254.6L521.6 252.9L523.4 252.8L526.4 252.9L528.6 252.1ZM537.8 254.6L539.7 254.5L542.1 254.6L542.7 257.0L544.1 258.2L546.4 256.6L547.8 255.6L550.5 256.6L552.3 257.2L554.5 258.0L557.3 258.6L558.6 259.6L559.4 260.9L561.5 261.9L562.3 262.9L561.2 263.2L562.3 264.6L563.4 265.9L564.9 267.0L566.8 268.0L565.9 268.6L563.4 268.0L561.5 267.0L559.7 264.9L557.9 264.4L556.0 265.2L555.5 266.4L552.7 266.6L550.1 265.2L547.8 265.4L548.9 264.0L548.3 262.0L546.8 260.9L544.9 260.0L542.7 259.2L540.4 259.0L539.4 258.2L541.2 257.2L539.4 256.6L537.5 255.6ZM563.1 261.3L566.3 260.6L568.9 259.5L568.6 260.6L566.3 262.3L564.1 262.3ZM522.4 226.8L524.5 226.9L524.8 229.1L523.7 230.6L523.7 232.3L524.9 233.2L526.8 233.8L527.1 235.5L526.1 234.9L523.4 233.8L522.2 233.9L521.6 232.5L521.1 230.1L521.9 227.6ZM529.3 239.5L530.7 242.1L530.4 244.6L529.2 245.5L527.1 244.3L526.4 242.8L524.3 243.7L525.5 242.0L527.0 241.3L528.2 241.4L529.0 240.7ZM527.9 235.7L529.6 237.8L528.9 239.0L527.7 237.5ZM524.5 236.7L525.9 237.8L525.9 240.4L524.8 239.5L524.0 238.5ZM520.5 237.4L519.7 239.3L517.1 241.4L518.1 240.4L520.5 238.7ZM513.1 265.0L514.8 265.0L516.8 265.2L519.0 265.0L521.2 265.3L524.2 265.2L525.6 265.3L525.3 266.0L522.7 266.2L519.7 266.0L516.8 266.3L514.5 266.0L513.2 265.6ZM519.7 266.9L521.2 266.7L522.4 267.7L521.2 268.0L519.7 267.5ZM526.4 268.2L527.6 266.7L531.3 265.4L530.8 266.3L527.1 268.0ZM532.9 250.4L532.3 252.1L532.7 254.6L533.8 253.5L534.1 251.5ZM533.0 257.5L536.7 257.5L537.0 258.5L533.3 258.3ZM554.5 268.7L555.5 270.6L556.7 273.8L558.6 275.0L559.4 277.7L560.9 281.3L563.8 283.1L564.4 284.1L566.8 286.1L567.5 288.0L569.9 290.3L570.5 293.7L570.9 295.4L570.0 298.4L568.3 302.3L567.4 303.9L566.2 306.6L565.5 309.9L562.3 310.6L560.3 312.6L558.2 311.4L558.1 310.6L556.0 312.1L553.0 311.3L551.5 310.7L550.4 309.1L548.6 306.7L548.6 305.4L547.4 306.1L547.5 301.6L544.7 305.6L542.7 303.6L541.2 301.2L537.8 300.0L534.5 300.2L530.1 301.3L527.1 302.8L524.2 303.9L520.5 304.9L518.1 305.9L513.9 304.7L513.8 303.3L514.8 300.8L513.8 297.6L513.2 295.8L512.0 292.9L511.3 291.4L511.6 289.9L511.9 287.6L512.5 285.0L513.8 284.9L516.5 283.4L519.1 282.8L522.4 281.9L524.5 279.4L525.3 277.6L526.5 277.0L528.6 275.0L530.8 273.5L532.3 273.2L533.8 274.7L535.1 274.7L535.7 272.8L537.2 271.2L538.7 270.9L539.0 269.6L540.4 269.5L541.9 270.6L545.6 270.6L546.2 271.1L544.9 272.8L544.1 274.7L545.6 275.7L547.4 276.7L549.3 277.6L550.8 278.8L552.1 278.6L552.9 276.4L553.2 273.5L553.3 271.3L553.9 269.2ZM557.8 315.4L560.4 315.6L562.9 315.8L563.1 317.7L562.5 319.8L560.9 320.6L559.4 319.8L558.6 317.7ZM599.2 304.7L601.6 306.2L602.6 308.7L604.4 310.1L607.5 310.1L606.9 313.0L605.4 313.3L603.0 317.0L602.3 316.5L602.9 314.7L602.5 314.0L600.8 313.0L602.2 311.3L602.2 309.6L601.1 307.9L599.8 305.7ZM599.2 315.1L600.1 316.5L601.6 316.3L600.7 318.4L599.3 320.6L599.8 321.1L597.1 322.0L596.1 324.8L593.7 326.1L592.7 326.1L591.5 325.3L590.0 325.0L590.8 323.1L592.7 321.3L595.6 319.5L597.3 317.7L598.2 316.8ZM586.3 282.5L588.5 284.3L590.8 285.8L589.9 285.8L587.1 283.8ZM368.0 104.8L364.3 101.4L362.1 98.7L359.9 93.4L367.3 91.3L373.2 90.5L376.2 89.6L383.6 90.5L381.3 94.2L374.7 95.5L375.4 98.3L371.0 101.4ZM414.6 90.5L413.2 87.9L426.5 87.0L429.4 84.3L436.8 87.0L432.4 90.1L423.5 89.2ZM425.7 124.8L420.6 122.0L421.3 118.9L423.5 116.3L425.4 112.9L428.7 108.7L434.6 105.9L445.0 103.5L444.2 106.2L438.3 108.7L432.4 112.2L428.7 115.6L426.5 118.9L428.0 122.0L428.4 124.8ZM491.6 99.8L483.5 95.5L479.8 89.2L484.9 86.1L490.1 90.1L494.6 93.4L499.0 96.3L498.3 99.4ZM547.1 111.2L547.1 107.7L550.8 106.2L555.2 108.0L559.7 107.3L566.3 109.4L564.1 111.2L556.7 110.5L550.8 111.9ZM550.8 116.6L552.3 114.6L556.0 114.9L555.2 116.6ZM608.2 124.2L610.0 122.0L613.7 122.6L613.0 123.9ZM415.4 130.1L415.4 128.4L417.6 128.7L417.3 130.1ZM430.9 127.5L430.5 125.4L432.8 125.7L432.8 127.2Z" fill="#a9c3cc"/><rect x="354" y="163" width="12" height="12" fill="#d8ee70"/><rect x="405" y="185" width="11" height="11" fill="#1d3f4a"/><rect x="386" y="206" width="11" height="11" fill="#1d3f4a"/><rect x="453" y="210" width="11" height="11" fill="#1d3f4a"/><rect x="272" y="284" width="11" height="11" fill="#1d3f4a"/><rect x="0" y="366" width="16" height="17" fill="#d0ee60"/></g><rect x="133.500" y="8.400" width="38" height="9" fill="#0b0b0b"/><rect x="143.500" y="41.500" width="25.500" height="14.500" fill="#6a6a68"/><ellipse cx="156" cy="49" rx="3.500" ry="4.500" fill="#8a7468"/><rect x="143.500" y="41.500" width="8" height="14.500" fill="#4a3e3a"/><rect x="5" y="2" width="38" height="1.200" fill="#555"/><rect x="48" y="2" width="22" height="1.200" fill="#444"/><rect x="150" y="14" width="7" height="1.800" fill="#ddd"/><rect x="135" y="5" width="22" height="1.200" fill="#666"/><circle cx="136" cy="10" r="1" fill="#c8a040"/><g fill="#555"><rect x="36" y="92" width="8" height="1"/><rect x="53" y="92" width="12" height="1"/><rect x="70" y="92" width="12" height="1"/><rect x="87" y="92" width="9" height="1"/><rect x="100" y="92" width="9" height="1"/><rect x="113" y="92" width="10" height="1"/><rect x="148" y="92" width="8" height="1"/></g><circle cx="134" cy="92.500" r="1.600" fill="#d02040"/></svg><span id="t21" class="t" style="left:5.6px;top:12.2px;font-size:6px;line-height:8px;color:#333;font-weight:400;letter-spacing:-0.102px;">Our</span><span id="t22" class="t" style="left:17.2px;top:12.2px;font-size:6px;line-height:8px;color:#333;font-weight:400;letter-spacing:-0.064px;text-decoration:underline;">Liaison Offices</span><span id="t23" class="t" style="left:57.3px;top:12.2px;font-size:6px;line-height:8px;color:#333;font-weight:400;letter-spacing:-0.038px;">in 4 Countries</span><span id="t24" class="t" style="left:72.5px;top:37.2px;font-size:3px;line-height:4px;color:#333;font-weight:400;letter-spacing:-0.035px;">Freie Universität Berlin</span><span id="t25" class="t" style="left:86.0px;top:45.3px;font-size:3px;line-height:4px;color:#333;font-weight:400;letter-spacing:-0.096px;">Tbilisi</span><span id="t26" class="t" style="left:71.0px;top:49.7px;font-size:3px;line-height:4px;color:#333;font-weight:400;letter-spacing:-0.134px;">Cairo</span><span id="t27" class="t" style="left:95.5px;top:50.6px;font-size:3px;line-height:4px;color:#333;font-weight:400;letter-spacing:-0.075px;">New Delhi</span><span id="t28" class="t" style="left:58.5px;top:65.5px;font-size:3px;line-height:4px;color:#333;font-weight:400;letter-spacing:-0.040px;">Sao Paulo</span><span id="t29" class="t" style="left:5.6px;top:83.5px;font-size:1.5px;line-height:2px;color:#555;font-weight:400;letter-spacing:-0.014px;">Tobias A. Stüdemann | Verbindungsbüro Osteuropa | Liaison Office Eastern Europe</span></div><div class="abs" style="left:600.7px;top:214.0px;width:172.3px;height:96.5px;border-radius:8px;background:#4b4b4b"></div><span id="t30" class="t" style="left:609.8px;top:243.2px;font-size:15.2px;line-height:21px;color:#ffffff;font-weight:400;letter-spacing:0.429px;-webkit-text-stroke:0.100px #fff;">Carole Mancel Blan...</span><svg style="left:608.4px;top:266.3px;" width="14.8" height="14.8" viewBox="0 0 14.8 14.8"><circle cx="7.4" cy="7.4" r="6.4" fill="none" stroke="#f2a230" stroke-width="1.150"/><text x="7.4" y="10.82" font-size="9.5" font-weight="700" fill="#f2a230" text-anchor="middle" font-family="Liberation Sans, sans-serif">?</text></svg><span id="t31" class="t" style="left:627.6px;top:263.5px;font-size:15.8px;line-height:22px;color:#f2a230;font-weight:400;letter-spacing:0.560px;-webkit-text-stroke:0.100px #f2a230;">Не подтверждено</span><svg style="left:610.6px;top:287.7px;" width="13" height="14.5" viewBox="0 0 13 14.500"><g fill="none" stroke="#f2909c" stroke-width="1.150" stroke-linecap="round"><rect x="4.300" y="1" width="4.800" height="8.200" rx="2.400"/><path d="M2.600 7.500c.300 2.300 2 3.700 4.100 3.700s3.800-1.400 4.100-3.700M6.700 11.200v2.300M3.200 13.700h7M1 0.800l11 12.200"/></g></svg><div class="abs" style="left:781.0px;top:214.0px;width:172.0px;height:96.5px;border-radius:8px;background:#000"></div><svg style="left:790.6px;top:287.7px;" width="13" height="14.5" viewBox="0 0 13 14.500"><g fill="none" stroke="#f2909c" stroke-width="1.150" stroke-linecap="round"><rect x="4.300" y="1" width="4.800" height="8.200" rx="2.400"/><path d="M2.600 7.500c.300 2.300 2 3.700 4.100 3.700s3.800-1.400 4.100-3.700M6.700 11.200v2.300M3.200 13.700h7M1 0.800l11 12.200"/></g></svg><div class="abs" style="left:961.0px;top:214.0px;width:172.7px;height:96.8px;border-radius:8px;background:#3b3b3b"></div><div class="abs" style="left:982px;top:214px;width:131px;height:96.800px;overflow:hidden"><svg style="left:0;top:0" width="131" height="96.800" viewBox="0 0 131 97" preserveAspectRatio="none"><defs><filter id="b5" x="-20%" y="-20%" width="140%" height="140%"><feGaussianBlur stdDeviation="2.300"/></filter><filter id="b5s" x="-20%" y="-20%" width="140%" height="140%"><feGaussianBlur stdDeviation="3.200"/></filter>
<linearGradient id="w5" x1="0" y1="0" x2="0" y2="1"><stop offset="0" stop-color="#bfc4b9"/><stop offset=".45" stop-color="#c9cac4"/><stop offset="1" stop-color="#a5a5a2"/></linearGradient></defs>
<rect width="131" height="97" fill="url(#w5)"/>
<g filter="url(#b5)">
<rect x="118" y="-4" width="18" height="34" fill="#b2baba"/><path d="M116 0l10 26" stroke="#8f938f" stroke-width="2"/>
<rect x="1" y="35" width="64" height="38" fill="#8db3da"/><rect x="1" y="33" width="62" height="3.500" fill="#d4786a"/>
<ellipse cx="40" cy="50" rx="7" ry="9" fill="#d8c070"/><ellipse cx="31" cy="60" rx="6" ry="5" fill="#d0987a"/><ellipse cx="22" cy="50" rx="8" ry="8" fill="#7eaad8"/><ellipse cx="12" cy="63" rx="6" ry="5" fill="#a8c8a0"/><ellipse cx="36" cy="43" rx="5" ry="4" fill="#6f8fd0"/>
<path d="M75 33h27l4 30H72z" fill="#565a60"/>
<rect x="120" y="48" width="14" height="30" fill="#8e9498"/>
<rect x="86" y="62" width="52" height="42" fill="#8b8b89"/>
<rect x="-4" y="76" width="52" height="26" fill="#babab4"/>
<path d="M30 102c6-9 14-11 22-11h44v14z" fill="#60625e"/>
</g>
<g filter="url(#b5)">
<ellipse cx="64" cy="76" rx="20.500" ry="35" fill="#a0948c"/>
<ellipse cx="57" cy="49" rx="13" ry="7" fill="#c9b68e"/>
<ellipse cx="60" cy="69" rx="14" ry="4.500" fill="#7f736b"/>
<ellipse cx="73" cy="78" rx="6" ry="12" fill="#b4aca8"/>
<ellipse cx="66" cy="93" rx="13" ry="7" fill="#b8b4b1"/>
</g></svg></div><div class="abs" style="left:965.0px;top:282.8px;width:24.0px;height:24.0px;border-radius:5.500px;background:#1c1b1b"></div><svg style="left:970.6px;top:287.7px;" width="13" height="14.5" viewBox="0 0 13 14.500"><g fill="none" stroke="#f2909c" stroke-width="1.150" stroke-linecap="round"><rect x="4.300" y="1" width="4.800" height="8.200" rx="2.400"/><path d="M2.600 7.500c.300 2.300 2 3.700 4.100 3.700s3.800-1.400 4.100-3.700M6.700 11.200v2.300M3.200 13.700h7M1 0.800l11 12.200"/></g></svg><div class="abs" style="left:1142px;top:214px;width:172px;height:96.800px;border-radius:8px;overflow:hidden"><svg style="left:0;top:0" width="172" height="96.800" viewBox="0 0 172 97" preserveAspectRatio="none"><defs><filter id="b6" x="-20%" y="-20%" width="140%" height="140%"><feGaussianBlur stdDeviation="2.200"/></filter><filter id="b6s" x="-20%" y="-20%" width="140%" height="140%"><feGaussianBlur stdDeviation="2.400"/></filter>
<linearGradient id="w6" x1="0" x2="1"><stop offset="0" stop-color="#c1cbce"/><stop offset=".4" stop-color="#dae2e4"/><stop offset=".72" stop-color="#eef3f3"/><stop offset="1" stop-color="#f7fafa"/></linearGradient></defs>
<rect width="172" height="97" fill="url(#w6)"/>
<g filter="url(#b6)">
<rect x="126" y="-4" width="14" height="70" fill="#dfe9f0"/><rect x="140" y="-4" width="10" height="80" fill="#ffffff"/><rect x="150" y="-4" width="26" height="105" fill="#eef4f6"/>
<rect x="-4" y="68" width="50" height="34" fill="#e2e8ea"/>
<rect x="20" y="70" width="24" height="3" fill="#8a9298"/>
<path d="M66 64C60 20 76 -8 100 -8s34 20 30 52c-1 12 2 22 4 30L120 84H76z" fill="#3d302c"/>
<path d="M123 30c6 14 6 34 2 46l-12 4z" fill="#907a6c"/>
<path d="M32 102C38 74 50 62 72 60l20 8 30-2c18 2 28 14 34 36z" fill="#1d1b1f"/>
<path d="M108 72c16 0 36 8 46 30H104z" fill="#7a7472"/>
</g>
<g filter="url(#b6s)">
<ellipse cx="98.500" cy="48" rx="20" ry="29" fill="#c0a694"/>
<ellipse cx="98" cy="24" rx="17" ry="9" fill="#8a7264"/>
<ellipse cx="98" cy="43" rx="17" ry="4" fill="#a08878"/>
<ellipse cx="99" cy="64" rx="12" ry="8" fill="#b4998a"/>
</g>
<g filter="url(#b6)">
<rect x="85" y="84" width="19" height="18" fill="#4a4048"/>
<path d="M77 74l6 2 1 26h-7z" fill="#e8853a"/><path d="M104 86l5-4 1 20h-6z" fill="#e8853a"/>
</g></svg></div><div class="abs" style="left:1146.2px;top:282.8px;width:23.8px;height:24.0px;border-radius:5.500px;background:#333233"></div><svg style="left:1151.7px;top:287.7px;" width="13" height="14.5" viewBox="0 0 13 14.500"><g fill="none" stroke="#f2909c" stroke-width="1.150" stroke-linecap="round"><rect x="4.300" y="1" width="4.800" height="8.200" rx="2.400"/><path d="M2.600 7.500c.300 2.300 2 3.700 4.100 3.700s3.800-1.400 4.100-3.700M6.700 11.200v2.300M3.200 13.700h7M1 0.800l11 12.200"/></g></svg><span id="t32" class="t" style="left:11.0px;top:335.5px;font-size:13.5px;line-height:19px;color:#ffffff;font-weight:400;letter-spacing:0.513px;-webkit-text-stroke:0.070px #fff;">Просмотр контента в совместном доступе участника Tobias Stüdemann | Freie Universität ...</span><div class="abs" style="left:717.0px;top:344.3px;width:11.0px;height:1.4px;background:#9a9a9a"></div><span id="t33" class="t" style="left:758.0px;top:336.0px;font-size:13px;line-height:18px;color:#ffffff;font-weight:400;letter-spacing:0.245px;-webkit-text-stroke:0.070px #fff;">100...</span><div class="abs" style="left:824.5px;top:344.4px;width:11.0px;height:1.2px;background:#c8c8c8"></div><div class="abs" style="left:829.4px;top:339.5px;width:1.2px;height:11.0px;background:#c8c8c8"></div><svg style="left:1486.0px;top:339.0px;" width="15" height="12" viewBox="0 0 15 12"><path d="M1 8.500C3 6 5.500 1.500 7 2.200c1.300.6-1.800 6.200-.300 6.800 1.200.5 2.200-3.300 3.600-3 1.300.300.200 3.600 1.200 4.200.800.400 1.700-.300 2.300-1" fill="none" stroke="#d0d0d0" stroke-width="1.200" stroke-linecap="round"/></svg><svg style="left:1524.0px;top:339.5px;" width="11" height="11" viewBox="0 0 11 11"><path d="M6.500 0.700h3.800v3.800M4.500 10.300H0.700V6.500" fill="none" stroke="#d8d8d8" stroke-width="1.300"/></svg><div class="abs" style="left:428.0px;top:363.0px;width:698.0px;height:393.0px;background:#fff"></div><svg style="left:428px;top:363px;overflow:hidden" width="698" height="393" viewBox="0 0 698 393"><path d="M94.8 139.0L103.8 137.6L103.1 135.5L97.2 131.5L101.6 129.5L104.6 125.7L111.8 122.6L118.6 124.2L124.6 125.4L130.5 126.6L134.9 127.8L140.1 129.5L146.0 127.8L151.9 126.3L155.6 127.2L159.0 126.0L160.1 128.4L164.5 127.5L170.4 129.5L174.1 132.4L180.8 133.0L185.2 131.8L191.2 133.0L197.8 131.5L200.0 130.1L202.3 128.1L203.7 120.8L206.3 122.6L207.7 126.0L206.7 128.1L209.7 129.8L211.9 129.0L214.1 132.4L214.8 134.4L217.1 131.0L217.4 127.5L221.5 127.2L223.0 131.0L223.3 135.2L220.0 137.4L216.3 137.1L214.8 139.8L213.4 142.6L209.7 143.4L207.0 146.2L204.2 150.6L204.0 155.7L206.7 159.3L210.4 159.8L214.0 162.0L217.8 163.5L221.8 163.7L221.9 168.3L224.5 171.8L226.7 171.4L227.0 168.5L225.9 165.0L228.6 163.5L230.2 160.9L227.3 155.9L229.2 152.9L228.2 147.2L231.9 147.6L237.8 149.8L240.1 150.8L240.7 155.2L243.0 156.8L245.9 155.7L248.0 152.0L249.9 155.2L252.7 159.8L255.5 163.7L258.8 166.2L261.0 167.3L261.2 170.0L259.2 171.6L254.8 174.0L249.6 174.0L245.2 174.0L244.0 175.7L241.0 177.7L238.8 180.2L242.2 177.5L245.9 176.1L248.1 175.9L247.7 178.3L246.7 178.6L248.4 181.5L249.6 182.0L252.6 182.4L254.2 180.2L254.8 182.8L253.3 183.3L249.6 184.8L246.5 186.6L245.8 184.8L248.1 183.5L244.4 183.7L242.5 185.0L239.7 186.3L238.8 188.4L240.0 189.3L239.0 190.2L236.3 190.7L234.1 191.6L233.6 193.9L232.6 194.7L232.0 196.4L231.1 197.9L231.9 200.8L229.6 201.9L227.4 203.2L225.3 204.9L223.7 206.2L223.1 208.7L224.3 211.7L225.2 214.4L224.6 216.8L223.6 217.0L222.2 214.8L221.1 212.8L221.1 210.9L219.3 209.4L217.4 209.8L215.6 208.7L213.4 208.9L211.1 209.0L211.4 210.6L209.2 210.8L205.2 209.8L203.4 210.3L200.8 212.0L199.4 214.1L199.7 215.8L199.0 218.7L198.9 221.2L199.7 223.9L201.4 225.9L203.3 226.8L205.2 227.2L207.7 226.8L209.4 225.0L209.8 223.2L213.4 222.3L214.8 222.6L214.2 224.7L213.7 226.9L213.1 227.9L212.0 230.6L213.4 230.9L216.3 230.7L217.8 230.6L220.3 232.0L220.0 234.9L219.7 237.8L220.8 239.3L221.9 240.7L223.7 240.7L225.5 240.1L227.0 240.0L228.9 241.1L228.3 243.3L227.7 242.1L225.9 240.8L224.5 241.8L224.6 243.1L223.0 242.7L220.9 241.8L220.0 241.4L217.8 239.8L216.6 238.0L215.1 236.4L213.8 234.9L211.9 234.6L208.9 233.6L207.0 232.8L204.5 230.7L202.6 230.3L200.8 231.0L196.2 229.7L192.9 228.2L190.3 227.2L188.2 225.7L187.5 223.9L187.8 222.4L186.1 219.9L183.3 217.1L181.4 214.5L178.9 212.5L177.1 210.1L175.9 207.3L173.7 206.8L174.0 209.4L176.7 212.5L178.9 215.6L180.2 218.2L181.5 220.2L180.8 220.3L177.8 217.9L177.1 215.3L174.9 214.4L173.4 212.8L172.7 210.1L171.6 208.1L170.3 205.4L168.5 203.4L165.3 202.3L163.6 199.6L162.3 196.6L160.5 194.7L159.5 192.1L159.6 189.3L159.9 185.7L160.1 181.7L159.0 177.5L161.6 177.9L162.3 179.6L161.3 176.3L158.6 174.4L154.9 172.4L153.4 169.3L150.6 165.6L149.0 163.0L146.8 160.9L143.8 156.8L143.2 154.8L141.1 156.8L136.8 154.1L133.4 152.9L129.0 152.2L126.0 150.6L123.8 151.7L119.4 153.6L121.6 150.1L118.2 151.7L115.7 154.6L113.5 157.5L110.5 159.8L107.5 162.0L103.8 163.7L100.1 164.7L103.1 163.5L105.3 162.0L109.8 159.1L110.8 156.4L106.1 155.7L103.8 156.2L102.4 153.4L99.0 151.7L97.9 149.4L99.4 146.9L102.4 145.2L105.3 144.4L105.0 141.8L101.6 142.1L97.5 141.6ZM278.6 153.4L272.6 151.0L270.0 148.1L267.4 143.1L264.4 137.9L264.0 133.8L268.1 130.4L262.5 127.2L262.9 124.5L261.5 122.0L260.0 117.2L258.8 112.2L255.5 107.7L250.4 106.2L244.4 106.9L239.3 104.0L238.5 101.4L235.9 98.7L243.0 95.5L244.4 91.3L247.4 87.9L251.8 84.8L257.8 81.6L266.6 81.1L275.5 78.7L287.4 75.8L296.2 74.8L305.1 76.3L311.8 80.1L314.0 83.4L325.8 84.3L321.4 89.2L317.7 91.3L316.2 95.5L314.7 99.4L316.2 103.3L314.3 106.9L316.2 110.5L314.7 112.2L312.5 115.6L311.0 118.9L311.3 122.0L310.6 125.1L306.6 126.6L308.8 128.1L305.1 130.1L299.2 131.8L294.0 135.2L290.3 137.9L285.1 139.2L283.7 142.4L282.2 145.7L280.6 149.4L280.0 152.5ZM315.5 144.7L310.0 143.6L308.1 141.1L307.3 139.2L309.6 136.8L312.5 137.9L313.6 139.0L317.0 137.4L319.9 136.5L323.5 139.2L322.1 142.1L319.2 143.6ZM245.9 148.4L240.7 146.9L237.8 144.4L231.1 142.6L228.2 141.8L228.9 139.8L234.1 139.2L235.6 135.2L232.6 131.0L228.2 127.8L227.4 126.0L222.2 126.9L216.3 124.5L211.1 122.0L211.9 117.2L215.6 114.6L222.2 114.9L228.2 116.6L229.6 117.9L233.3 121.1L240.0 124.2L243.7 126.6L245.2 130.4L252.6 135.2L251.8 137.9L249.6 140.5L244.4 138.2L247.4 141.3L248.1 144.9L242.2 144.2L246.7 148.1ZM193.4 129.0L188.2 129.8L182.3 130.7L175.6 131.3L171.2 129.0L169.7 125.1L167.5 122.0L169.0 117.9L174.1 116.3L179.3 118.2L183.8 117.2L188.2 115.6L188.9 118.2L192.6 122.0L194.4 125.7ZM161.3 123.0L157.4 120.5L159.3 115.6L160.1 112.6L164.5 112.9L171.2 115.6L166.7 118.9L164.5 122.3ZM223.7 105.9L211.1 105.1L213.4 100.2L213.4 97.5L214.8 93.4L213.4 89.2L207.4 86.1L214.8 82.5L222.2 79.7L232.6 77.3L243.0 77.7L251.1 80.1L249.6 83.4L246.7 87.0L241.5 90.1L237.0 93.0L232.6 95.5L231.9 98.7L228.2 102.1ZM212.6 98.7L206.7 98.3L202.3 93.4L201.5 88.8L206.0 85.7L212.6 90.1L214.1 94.7ZM225.2 111.9L219.3 112.2L213.4 111.9L207.4 111.5L204.5 107.7L206.0 105.1L210.4 104.8L213.4 106.9L219.3 108.7L225.2 108.0L225.9 110.5ZM203.0 120.5L201.5 117.2L202.3 113.9L207.4 113.9L209.7 117.2L206.7 119.8ZM198.6 122.0L192.6 120.5L191.9 117.2L196.3 114.6L199.6 116.3L200.6 120.5ZM186.0 112.2L177.8 110.5L170.4 109.4L171.2 105.9L177.8 104.4L183.8 105.1L187.5 108.7L188.2 111.2ZM198.6 110.5L194.1 110.5L191.9 105.5L197.1 104.4L199.3 106.9ZM169.0 106.2L162.3 105.1L166.0 102.1L171.2 101.4L171.9 104.0ZM197.1 100.2L189.7 99.4L187.5 95.5L192.6 93.8L197.1 96.3ZM217.1 145.2L214.8 143.9L215.6 141.8L217.4 138.7L220.0 138.4L223.0 141.1L224.8 144.4L220.8 143.9ZM200.0 131.0L197.1 129.0L199.3 127.2L202.3 129.0ZM264.9 180.7L265.6 179.0L264.9 177.3L264.3 175.3L261.0 175.0L261.5 171.2L258.8 173.0L257.3 175.9L255.8 178.8L258.5 179.0L261.0 180.3ZM161.0 177.5L159.0 177.3L156.7 175.7L154.3 174.0L153.7 172.8L157.1 173.4L159.3 175.3ZM149.6 170.4L147.1 167.7L146.9 165.8L148.7 166.2L148.7 168.3ZM115.4 160.2L114.5 158.6L116.9 157.5L118.3 158.6ZM217.9 221.8L220.5 220.3L223.0 219.9L225.9 220.8L228.9 222.1L231.1 222.9L233.8 224.4L231.9 224.8L228.8 224.8L228.0 223.6L225.9 222.3L223.4 221.5L220.5 221.1ZM233.5 227.2L235.0 225.1L237.8 224.8L241.0 225.7L242.4 227.0L239.3 227.3L237.8 228.1L235.6 227.3ZM227.7 227.3L228.9 226.9L230.7 227.5L229.3 227.9ZM244.1 227.6L244.3 226.9L246.4 227.0L246.2 227.6ZM228.9 241.1L231.1 240.0L231.9 238.5L232.9 237.7L234.8 237.4L237.5 235.8L238.1 236.8L240.0 237.1L240.0 236.1L241.5 237.2L243.0 238.5L245.9 238.4L247.4 239.0L250.4 238.3L252.0 238.3L252.6 239.5L254.1 241.3L256.6 242.8L257.5 243.8L259.2 245.0L262.2 245.1L264.4 245.4L266.3 246.5L267.4 247.5L269.2 250.7L269.6 252.8L271.1 253.8L272.6 254.5L274.8 254.9L277.0 255.6L278.0 257.0L281.7 257.5L284.4 257.8L286.6 258.8L289.1 260.6L291.1 260.9L292.1 263.6L291.5 266.3L289.7 268.5L286.6 272.1L285.9 275.0L285.6 278.6L284.7 281.7L283.1 283.8L282.9 285.3L281.4 286.8L279.2 286.8L277.0 287.6L275.1 288.3L272.6 290.2L271.7 291.7L271.4 295.3L269.6 296.9L268.1 299.2L266.5 301.2L264.6 303.6L262.9 305.2L260.4 305.6L258.1 304.7L257.2 304.1L258.9 305.7L259.5 307.9L258.8 309.9L257.0 311.6L253.3 312.5L251.5 312.5L251.5 315.4L249.6 315.9L247.4 316.3L248.1 318.0L249.3 318.6L248.1 319.5L247.0 322.2L244.7 323.5L243.6 325.0L245.5 326.8L246.1 328.4L243.6 330.7L241.5 333.2L241.5 335.6L242.4 337.5L243.0 339.7L247.1 342.3L245.2 343.1L244.0 344.8L240.0 343.5L237.0 341.2L233.6 338.7L232.6 336.6L232.0 332.6L231.9 328.7L231.9 325.9L234.1 323.1L235.6 320.4L234.1 317.7L234.4 316.8L234.5 314.2L234.8 311.6L234.7 309.4L235.9 307.4L237.0 304.1L237.8 300.8L237.9 297.6L238.2 294.5L239.0 291.4L239.3 288.3L239.7 285.3L239.7 282.3L239.4 280.0L237.8 278.3L235.9 277.2L232.6 275.7L230.7 273.5L229.3 270.6L227.9 267.7L226.4 264.9L224.0 262.4L223.6 262.0L223.3 260.2L224.8 258.5L225.2 257.0L223.7 256.6L223.9 254.9L225.1 253.4L226.2 252.1L226.7 251.1L227.9 249.8L229.3 248.1L229.0 245.7L228.8 243.8L228.3 243.3ZM254.1 335.2L257.8 335.2L257.0 337.0L253.6 337.0ZM334.9 200.0L339.3 200.9L340.6 201.1L343.5 200.0L348.0 198.3L351.0 198.1L354.7 197.9L358.1 197.4L359.9 197.9L359.4 200.0L358.5 202.4L360.0 203.7L363.1 204.7L366.1 205.5L368.0 207.4L371.7 208.9L373.3 207.8L373.2 206.0L375.7 204.7L377.9 205.2L380.6 206.3L383.6 207.0L386.5 207.9L387.9 207.4L390.7 207.0L391.4 207.4L391.7 209.4L392.0 210.9L393.5 213.3L394.4 215.6L396.1 218.7L398.1 221.7L398.7 223.9L399.0 226.2L400.6 227.6L401.6 230.6L402.2 231.6L404.3 232.8L406.6 234.9L407.7 235.7L407.5 237.1L409.5 238.5L411.7 238.3L414.6 237.5L419.4 236.7L419.5 238.7L417.6 242.1L416.1 245.0L414.3 247.8L410.9 250.7L406.9 253.5L405.0 255.6L403.5 257.0L402.4 259.2L401.2 262.0L401.9 263.2L402.1 265.6L403.4 268.2L403.5 270.6L404.0 274.2L402.8 276.4L400.6 278.2L398.1 280.1L395.3 282.0L395.8 284.6L396.1 288.0L393.2 289.9L392.1 291.4L392.0 293.7L391.3 295.8L389.5 297.5L387.3 300.0L384.9 302.5L381.6 304.1L377.6 304.4L373.2 305.4L371.0 304.6L370.1 302.5L370.5 300.0L368.8 296.9L367.9 295.3L365.9 292.2L365.1 288.3L365.1 286.7L363.7 283.8L362.1 280.8L361.1 278.2L361.2 276.0L362.0 273.5L363.6 271.3L364.0 269.2L363.0 266.3L362.7 264.2L361.8 262.0L361.1 260.3L359.4 258.5L357.5 256.3L356.6 254.5L357.5 252.9L357.8 251.4L358.3 249.5L357.7 248.0L356.2 247.1L354.0 247.4L352.5 247.4L351.0 245.7L350.1 244.6L347.3 244.4L345.4 244.8L344.3 245.3L342.6 246.0L340.6 246.7L338.4 246.3L336.2 246.1L334.3 246.5L332.4 247.3L329.8 245.7L327.6 244.6L325.4 243.1L324.1 241.4L323.3 240.0L321.5 238.1L319.5 236.5L318.7 235.7L318.9 234.2L317.7 232.5L319.2 230.6L319.8 227.6L319.2 225.6L318.4 223.2L319.3 220.9L320.1 218.8L322.1 215.6L324.5 212.7L327.3 211.2L329.1 209.4L329.4 208.7L329.1 207.0L331.0 204.5L332.4 203.6L333.7 202.6ZM416.6 270.6L417.6 272.8L418.2 275.7L417.0 277.9L416.1 280.8L414.6 285.3L413.5 289.1L410.5 290.6L408.7 289.9L408.3 287.6L407.8 284.6L409.3 282.3L408.7 278.6L409.9 276.4L412.1 276.0L414.0 274.2L415.4 272.5ZM335.3 199.6L334.3 198.8L333.2 197.6L330.4 197.9L329.5 195.1L330.4 192.5L330.4 189.5L329.8 187.5L331.9 186.3L335.5 186.6L338.0 186.8L340.9 186.8L341.8 184.6L341.8 182.6L341.8 181.7L339.9 179.6L337.2 178.6L336.5 177.5L339.2 176.9L341.2 177.1L340.8 175.0L341.8 175.5L343.7 175.5L345.8 174.0L346.1 172.6L348.3 171.8L349.7 170.4L350.6 168.5L352.5 167.5L355.4 167.3L356.5 166.4L356.3 164.5L355.6 163.0L356.0 159.8L359.3 158.2L358.8 160.9L358.1 163.0L358.4 164.5L359.7 165.6L362.1 165.4L363.9 165.8L364.8 166.2L367.7 165.6L370.7 164.5L372.6 165.4L373.9 164.1L374.8 162.6L374.8 160.2L375.7 158.4L378.4 159.8L379.4 159.8L379.6 156.8L378.4 154.8L380.3 154.1L385.0 154.1L387.3 152.9L385.8 151.5L380.6 152.5L377.6 153.2L375.4 151.7L375.4 149.4L375.1 145.7L378.4 143.1L381.0 140.5L379.6 138.4L376.2 139.2L374.7 143.1L371.7 145.7L369.5 148.1L369.2 151.3L371.6 153.4L370.5 154.6L368.6 156.2L368.3 158.6L367.3 161.5L365.4 162.0L364.6 163.3L362.8 163.3L362.4 162.0L361.4 158.6L361.2 158.2L360.0 155.2L359.4 153.2L358.4 155.2L355.4 157.3L353.5 157.3L351.9 155.2L351.1 152.0L351.0 149.4L351.4 147.6L354.7 145.7L357.7 143.9L359.9 141.8L361.7 139.2L362.8 136.5L364.9 134.4L365.1 131.8L367.3 131.0L369.5 128.7L371.7 127.5L375.4 125.7L378.7 124.5L381.8 123.3L385.8 123.9L389.5 125.4L388.0 127.2L390.2 127.5L392.4 128.1L396.1 129.0L400.6 131.5L404.3 133.8L403.8 136.5L400.6 137.6L395.4 136.5L391.7 135.2L393.9 137.9L395.1 140.8L397.6 143.1L399.8 143.4L402.8 141.8L402.8 139.2L406.1 137.4L408.7 136.5L409.0 132.4L407.7 130.7L411.7 131.5L410.6 134.6L412.4 135.7L414.6 133.2L417.6 132.4L422.8 131.3L425.0 129.8L429.4 131.0L433.1 129.5L433.9 131.5L439.1 128.7L442.0 127.2L443.1 129.0L442.8 125.1L443.5 122.0L445.7 117.9L448.7 116.6L451.2 118.9L451.6 123.6L451.3 129.5L450.2 133.8L449.4 136.0L452.4 135.7L453.9 131.0L453.1 128.1L453.9 123.6L454.6 120.5L455.3 117.9L458.6 119.5L459.8 123.0L463.0 119.8L462.7 115.6L470.9 113.9L473.8 110.5L479.0 108.4L484.2 106.6L490.1 106.2L493.8 102.9L498.0 100.6L501.2 103.3L507.9 105.1L511.6 106.9L511.6 110.5L507.9 113.9L505.7 114.9L511.6 115.6L518.2 114.9L519.7 117.2L524.9 117.2L525.6 116.6L530.8 114.3L535.3 115.9L535.3 119.2L536.0 122.6L537.5 123.6L540.4 122.0L544.9 122.3L549.3 121.7L550.8 118.9L552.0 117.9L559.7 119.8L565.6 122.3L569.3 123.9L574.5 123.6L580.4 125.7L582.6 127.8L587.8 127.5L592.7 126.6L595.9 126.9L596.7 129.5L602.6 128.4L604.1 127.2L610.0 129.5L613.7 131.5L617.4 133.0L622.6 135.2L625.2 137.6L623.3 139.2L620.4 142.1L613.0 142.4L610.7 140.5L612.2 139.2L611.5 137.1L606.3 139.2L606.3 141.3L608.5 144.4L609.0 147.4L601.9 149.4L595.6 152.9L590.8 152.2L586.3 154.6L583.4 157.5L585.3 161.5L583.4 162.0L583.7 164.5L580.4 168.3L576.0 171.8L574.8 169.3L574.0 166.2L574.2 162.0L576.0 158.2L580.4 155.2L583.4 151.7L586.3 148.6L587.8 146.9L581.1 148.6L580.4 151.7L573.0 154.1L568.6 154.8L566.8 153.9L561.2 154.6L555.2 154.3L551.5 157.5L547.8 160.9L544.9 164.5L547.1 166.2L551.5 167.7L552.7 167.7L552.0 171.4L551.4 176.3L548.7 180.2L546.1 183.9L543.4 186.6L540.4 187.9L538.8 187.3L537.0 188.8L535.6 190.2L533.0 192.8L532.3 194.2L533.9 196.3L535.3 199.6L534.7 201.1L532.3 202.1L530.8 202.4L530.8 200.4L531.1 197.9L528.6 196.6L528.9 195.4L527.9 193.3L527.4 193.2L524.2 194.5L524.2 191.9L523.4 191.2L521.1 192.8L517.9 194.5L518.5 196.3L519.7 196.8L520.0 197.6L523.3 197.1L525.0 197.3L524.5 198.3L521.6 199.6L520.2 201.3L521.6 202.4L522.5 204.5L524.0 206.6L524.0 208.1L521.9 209.0L524.2 209.4L523.4 212.5L521.2 214.8L519.7 217.1L518.4 218.1L516.3 220.2L513.1 220.9L511.6 221.7L508.6 222.4L507.1 224.2L505.7 222.4L503.7 222.4L501.7 223.6L500.0 226.2L501.2 228.4L503.7 230.4L505.2 233.5L505.4 236.4L504.5 237.8L502.3 238.7L501.2 240.0L498.7 241.3L498.9 239.3L498.1 238.5L496.8 238.4L496.0 237.1L495.0 236.1L493.1 235.4L492.9 234.4L491.6 234.5L491.5 236.4L490.6 238.5L491.3 240.4L491.9 241.6L492.5 243.3L494.7 244.7L496.3 246.0L496.6 247.8L497.2 250.0L497.8 251.5L496.8 251.7L494.9 250.4L493.5 249.2L492.5 247.5L492.0 245.8L491.7 244.3L489.2 242.3L489.4 240.0L489.7 237.8L489.5 235.7L488.8 233.5L488.2 231.6L488.0 229.8L486.0 229.4L484.6 230.9L483.0 230.6L483.5 228.4L482.1 226.2L481.1 224.5L479.8 222.6L479.5 221.2L478.0 220.9L476.1 222.0L474.3 222.3L472.7 222.4L471.9 224.2L470.6 225.0L467.9 227.2L466.9 228.1L464.2 230.1L462.3 231.0L462.3 233.5L462.4 234.8L461.7 237.1L461.9 238.8L461.0 238.8L460.5 240.3L459.3 240.8L458.3 242.0L457.0 240.8L456.4 239.3L455.8 237.4L454.3 235.1L453.3 232.3L452.8 231.3L452.1 229.1L451.3 226.2L451.3 223.6L451.0 222.9L450.9 221.2L448.7 223.2L447.9 223.6L445.7 221.4L447.2 220.5L445.7 220.2L444.5 219.1L443.2 218.2L442.6 217.4L442.0 216.5L439.1 216.8L435.4 216.8L433.1 216.7L430.9 216.5L428.4 216.1L427.7 214.1L426.8 213.9L424.3 214.7L420.6 212.8L418.8 211.1L417.6 209.4L416.0 208.7L415.4 209.4L414.5 210.3L415.4 211.7L416.4 213.3L417.7 214.8L418.3 216.4L418.8 217.6L418.8 216.2L419.4 215.4L420.0 217.1L419.8 218.2L421.3 218.7L422.8 218.4L424.1 217.9L425.4 216.7L426.8 215.4L427.1 216.7L427.7 218.2L430.2 219.3L432.1 220.9L431.4 222.4L430.3 223.9L429.1 226.2L427.1 227.6L424.9 229.1L422.0 229.7L420.9 231.2L417.6 232.3L415.4 233.5L412.4 234.4L410.2 235.2L408.0 235.5L407.5 234.5L407.1 232.3L406.9 230.1L405.8 228.4L404.3 226.2L402.8 224.2L401.5 222.4L400.6 220.2L399.8 218.5L398.4 216.4L396.6 214.1L395.4 212.5L394.8 212.5L395.4 210.1L394.2 212.8L392.4 210.9L391.7 209.4L391.4 207.4L393.2 207.6L394.2 207.3L395.0 206.2L395.5 204.5L396.1 203.1L396.7 201.8L396.6 200.4L396.7 199.3L397.2 198.6L394.8 198.3L392.4 199.5L391.4 199.3L389.0 198.1L388.4 199.1L387.0 199.3L385.3 198.4L384.0 197.9L382.5 195.6L382.8 194.0L382.4 192.8L384.3 192.1L386.5 192.1L386.5 191.1L390.1 190.7L392.9 189.3L395.4 189.3L397.3 190.5L399.1 191.1L402.4 191.1L405.0 190.2L405.2 189.0L404.0 187.5L402.4 186.4L399.5 184.6L397.8 183.5L399.1 183.1L399.8 182.0L401.8 180.0L399.1 180.0L396.7 180.9L395.1 182.0L397.5 183.3L396.0 183.9L393.9 185.0L393.0 184.6L391.7 183.1L393.5 181.8L390.2 180.9L389.0 181.1L387.6 183.3L386.1 185.3L384.9 187.2L384.3 188.4L385.2 190.0L386.5 190.7L386.4 191.1L384.3 191.1L383.3 191.8L382.4 192.6L382.2 191.8L381.9 191.4L379.7 191.2L379.0 192.8L377.5 191.8L377.5 193.7L378.1 194.4L379.1 195.7L378.7 196.4L377.8 197.3L377.8 198.9L376.9 198.9L375.7 198.3L375.1 196.9L375.3 195.9L374.4 194.7L373.3 193.5L372.3 191.9L372.5 190.5L372.0 189.3L371.1 188.6L370.4 188.2L367.9 186.6L366.1 185.5L364.6 183.7L364.9 183.3L364.2 184.3L363.7 183.0L363.9 182.6L361.8 183.1L362.0 184.1L362.1 185.5L363.6 186.4L364.6 188.6L367.4 189.5L368.6 190.9L370.2 191.8L370.8 193.2L369.1 191.9L368.0 193.3L368.9 194.5L368.0 195.6L367.3 196.4L366.7 196.3L367.6 194.7L366.7 192.8L365.1 191.8L364.6 191.4L363.6 190.7L361.8 189.8L360.2 188.6L359.1 187.5L358.8 186.6L358.1 185.5L356.8 185.0L355.0 186.1L354.4 186.3L352.5 187.3L351.4 187.0L349.8 186.8L348.8 187.0L348.0 188.1L348.3 188.8L346.9 190.4L344.8 191.6L343.2 193.7L343.9 195.1L342.6 196.9L340.5 198.4L337.1 198.4ZM335.2 174.2L337.4 172.0L339.2 171.6L336.1 171.2L336.6 168.7L336.9 167.7L339.2 167.5L338.9 166.0L338.4 164.3L336.2 164.7L336.5 163.0L335.2 163.5L334.7 160.9L334.4 158.6L336.2 156.2L339.0 156.2L337.7 158.2L340.6 158.2L339.6 160.9L339.2 162.0L340.6 162.4L341.4 164.1L343.3 166.0L343.7 167.3L344.0 168.3L345.7 168.5L345.8 170.4L345.7 171.6L345.1 172.6L342.9 173.0L340.0 173.2L338.3 173.8L335.9 174.4ZM329.1 171.4L328.2 170.0L328.8 167.7L328.8 165.6L331.8 163.7L334.0 163.5L335.5 165.2L334.6 167.5L334.1 170.0L331.3 170.8ZM366.7 195.9L362.1 196.3L362.4 197.1L365.9 198.4L366.1 197.1ZM357.4 190.7L355.7 191.4L356.0 194.5L357.8 194.4L358.1 191.9ZM357.5 187.5L356.3 188.4L356.9 190.4L357.7 189.3ZM378.5 200.3L378.4 200.9L381.3 201.3L382.5 200.9L380.6 200.6ZM391.4 201.1L392.4 201.9L393.9 201.3L394.8 200.1L392.4 200.8ZM552.7 190.5L553.8 193.7L553.0 195.7L552.3 197.9L552.0 200.1L550.7 201.3L549.2 201.9L546.4 201.9L546.2 202.4L544.6 203.7L543.5 202.4L543.7 201.9L541.2 202.3L539.7 202.9L537.5 203.1L538.2 201.8L540.4 200.4L542.7 200.3L544.6 200.3L545.8 198.8L546.7 197.3L547.1 197.9L548.6 197.6L549.6 196.3L550.8 193.7L550.7 191.8L551.2 190.7ZM551.1 190.4L551.2 188.4L551.4 187.0L552.7 187.0L553.3 185.0L553.6 183.0L555.7 185.2L557.9 185.9L558.6 185.2L559.2 187.0L557.2 187.7L555.7 189.3L553.3 188.2L552.1 188.8L552.3 189.7ZM537.3 203.1L536.3 203.6L535.4 204.2L535.7 205.0L536.3 205.8L536.4 207.4L537.0 207.8L537.9 207.1L538.8 205.2L538.7 204.1ZM542.8 202.6L543.0 203.2L542.2 204.1L541.2 203.7L540.4 204.9L539.1 203.9L540.1 202.9L541.6 202.4ZM553.9 182.2L553.5 180.7L554.1 178.3L553.8 176.3L553.9 173.4L553.3 170.4L553.8 167.3L554.8 165.4L555.5 167.3L555.5 170.4L556.4 174.4L557.2 175.9L557.8 177.1L555.2 176.3L554.8 179.2L556.0 180.9L555.8 181.7ZM523.4 216.7L524.0 217.9L523.1 220.2L522.4 221.8L521.5 220.8L521.3 219.4L522.1 217.9L522.8 217.0ZM507.3 224.5L507.9 224.8L507.0 226.6L505.7 227.3L504.3 226.5L505.2 225.0L506.7 224.5ZM462.1 239.5L463.8 241.3L464.8 243.6L462.9 245.0L462.1 244.8L461.7 242.8L461.9 240.8ZM484.6 245.5L487.9 246.1L489.7 247.8L492.3 249.5L495.0 251.4L497.1 253.5L498.1 254.9L500.2 256.8L500.5 258.2L500.2 261.9L498.4 261.3L496.0 259.9L494.0 258.2L492.8 256.3L492.0 254.8L490.4 252.8L489.7 251.1L487.2 248.8L484.9 246.8ZM499.4 263.2L500.6 261.9L502.0 262.2L503.9 262.4L504.9 263.2L507.1 263.3L507.9 262.7L510.2 263.3L512.0 264.4L512.9 264.6L513.1 265.9L510.8 265.3L508.6 265.3L505.7 264.6L504.2 264.4L502.4 264.6L501.1 263.4ZM516.6 243.6L517.8 243.8L520.0 245.8L519.0 247.4L517.5 248.5L518.1 250.7L519.6 252.1L517.9 252.4L517.4 254.9L516.0 256.6L515.6 258.5L513.4 259.3L511.6 258.3L509.1 258.2L506.8 257.8L506.5 256.1L505.1 254.2L504.9 252.1L505.8 250.5L507.4 251.2L508.3 250.0L510.5 249.2L511.9 247.8L513.1 246.8L514.4 246.0L515.4 244.7ZM528.3 251.4L527.6 252.2L524.2 252.2L522.4 252.1L521.2 252.5L520.9 254.8L519.9 257.0L520.5 258.5L520.5 261.3L521.8 261.5L521.8 259.2L522.7 257.5L523.6 259.2L524.2 260.3L525.0 261.2L525.9 260.0L524.6 258.5L523.4 256.3L524.2 256.2L526.1 254.8L526.2 254.4L523.4 254.9L522.1 254.6L521.6 252.9L523.4 252.8L526.4 252.9L528.6 252.1ZM537.8 254.6L539.7 254.5L542.1 254.6L542.7 257.0L544.1 258.2L546.4 256.6L547.8 255.6L550.5 256.6L552.3 257.2L554.5 258.0L557.3 258.6L558.6 259.6L559.4 260.9L561.5 261.9L562.3 262.9L561.2 263.2L562.3 264.6L563.4 265.9L564.9 267.0L566.8 268.0L565.9 268.6L563.4 268.0L561.5 267.0L559.7 264.9L557.9 264.4L556.0 265.2L555.5 266.4L552.7 266.6L550.1 265.2L547.8 265.4L548.9 264.0L548.3 262.0L546.8 260.9L544.9 260.0L542.7 259.2L540.4 259.0L539.4 258.2L541.2 257.2L539.4 256.6L537.5 255.6ZM563.1 261.3L566.3 260.6L568.9 259.5L568.6 260.6L566.3 262.3L564.1 262.3ZM522.4 226.8L524.5 226.9L524.8 229.1L523.7 230.6L523.7 232.3L524.9 233.2L526.8 233.8L527.1 235.5L526.1 234.9L523.4 233.8L522.2 233.9L521.6 232.5L521.1 230.1L521.9 227.6ZM529.3 239.5L530.7 242.1L530.4 244.6L529.2 245.5L527.1 244.3L526.4 242.8L524.3 243.7L525.5 242.0L527.0 241.3L528.2 241.4L529.0 240.7ZM527.9 235.7L529.6 237.8L528.9 239.0L527.7 237.5ZM524.5 236.7L525.9 237.8L525.9 240.4L524.8 239.5L524.0 238.5ZM520.5 237.4L519.7 239.3L517.1 241.4L518.1 240.4L520.5 238.7ZM513.1 265.0L514.8 265.0L516.8 265.2L519.0 265.0L521.2 265.3L524.2 265.2L525.6 265.3L525.3 266.0L522.7 266.2L519.7 266.0L516.8 266.3L514.5 266.0L513.2 265.6ZM519.7 266.9L521.2 266.7L522.4 267.7L521.2 268.0L519.7 267.5ZM526.4 268.2L527.6 266.7L531.3 265.4L530.8 266.3L527.1 268.0ZM532.9 250.4L532.3 252.1L532.7 254.6L533.8 253.5L534.1 251.5ZM533.0 257.5L536.7 257.5L537.0 258.5L533.3 258.3ZM554.5 268.7L555.5 270.6L556.7 273.8L558.6 275.0L559.4 277.7L560.9 281.3L563.8 283.1L564.4 284.1L566.8 286.1L567.5 288.0L569.9 290.3L570.5 293.7L570.9 295.4L570.0 298.4L568.3 302.3L567.4 303.9L566.2 306.6L565.5 309.9L562.3 310.6L560.3 312.6L558.2 311.4L558.1 310.6L556.0 312.1L553.0 311.3L551.5 310.7L550.4 309.1L548.6 306.7L548.6 305.4L547.4 306.1L547.5 301.6L544.7 305.6L542.7 303.6L541.2 301.2L537.8 300.0L534.5 300.2L530.1 301.3L527.1 302.8L524.2 303.9L520.5 304.9L518.1 305.9L513.9 304.7L513.8 303.3L514.8 300.8L513.8 297.6L513.2 295.8L512.0 292.9L511.3 291.4L511.6 289.9L511.9 287.6L512.5 285.0L513.8 284.9L516.5 283.4L519.1 282.8L522.4 281.9L524.5 279.4L525.3 277.6L526.5 277.0L528.6 275.0L530.8 273.5L532.3 273.2L533.8 274.7L535.1 274.7L535.7 272.8L537.2 271.2L538.7 270.9L539.0 269.6L540.4 269.5L541.9 270.6L545.6 270.6L546.2 271.1L544.9 272.8L544.1 274.7L545.6 275.7L547.4 276.7L549.3 277.6L550.8 278.8L552.1 278.6L552.9 276.4L553.2 273.5L553.3 271.3L553.9 269.2ZM557.8 315.4L560.4 315.6L562.9 315.8L563.1 317.7L562.5 319.8L560.9 320.6L559.4 319.8L558.6 317.7ZM599.2 304.7L601.6 306.2L602.6 308.7L604.4 310.1L607.5 310.1L606.9 313.0L605.4 313.3L603.0 317.0L602.3 316.5L602.9 314.7L602.5 314.0L600.8 313.0L602.2 311.3L602.2 309.6L601.1 307.9L599.8 305.7ZM599.2 315.1L600.1 316.5L601.6 316.3L600.7 318.4L599.3 320.6L599.8 321.1L597.1 322.0L596.1 324.8L593.7 326.1L592.7 326.1L591.5 325.3L590.0 325.0L590.8 323.1L592.7 321.3L595.6 319.5L597.3 317.7L598.2 316.8ZM586.3 282.5L588.5 284.3L590.8 285.8L589.9 285.8L587.1 283.8ZM368.0 104.8L364.3 101.4L362.1 98.7L359.9 93.4L367.3 91.3L373.2 90.5L376.2 89.6L383.6 90.5L381.3 94.2L374.7 95.5L375.4 98.3L371.0 101.4ZM414.6 90.5L413.2 87.9L426.5 87.0L429.4 84.3L436.8 87.0L432.4 90.1L423.5 89.2ZM425.7 124.8L420.6 122.0L421.3 118.9L423.5 116.3L425.4 112.9L428.7 108.7L434.6 105.9L445.0 103.5L444.2 106.2L438.3 108.7L432.4 112.2L428.7 115.6L426.5 118.9L428.0 122.0L428.4 124.8ZM491.6 99.8L483.5 95.5L479.8 89.2L484.9 86.1L490.1 90.1L494.6 93.4L499.0 96.3L498.3 99.4ZM547.1 111.2L547.1 107.7L550.8 106.2L555.2 108.0L559.7 107.3L566.3 109.4L564.1 111.2L556.7 110.5L550.8 111.9ZM550.8 116.6L552.3 114.6L556.0 114.9L555.2 116.6ZM608.2 124.2L610.0 122.0L613.7 122.6L613.0 123.9ZM415.4 130.1L415.4 128.4L417.6 128.7L417.3 130.1ZM430.9 127.5L430.5 125.4L432.8 125.7L432.8 127.2Z" fill="#9bb7c2" stroke="#9bb7c2" stroke-width="0.600" stroke-linejoin="round"/><path d="M413.2 183.9L413.9 187.5L415.5 189.7L418.0 192.1L416.6 194.0L416.0 195.6L416.9 197.1L419.8 198.4L423.4 198.3L423.4 197.1L422.8 194.0L422.0 192.8L421.9 191.1L421.4 190.2L421.3 188.4L419.4 186.6L418.0 184.8L419.8 183.9L422.0 183.1L422.2 181.5L421.3 180.3L419.1 180.2L416.9 180.7L416.1 181.7L414.3 182.6ZM207.4 180.7L211.1 178.6L213.4 176.7L215.6 177.1L217.8 178.4L218.2 180.9L215.6 181.1L213.4 180.3L209.7 180.9ZM214.1 189.8L213.7 186.6L214.8 183.0L217.8 182.2L215.9 184.8L215.9 187.5L215.1 189.7ZM221.6 187.3L220.3 184.8L218.5 182.4L222.2 181.7L224.8 183.0L225.2 184.8L223.3 184.6L222.7 186.4ZM220.3 190.2L220.8 189.1L225.9 187.9L226.7 188.2L223.0 190.0ZM225.6 187.0L226.4 186.3L230.4 185.5L230.7 186.6L228.2 187.0ZM161.6 140.5L158.6 137.1L166.0 135.2L169.7 137.1L166.7 139.2ZM171.2 151.0L169.7 149.8L174.1 147.4L180.8 145.9L181.5 147.4L177.1 148.6L174.9 150.6ZM200.3 173.6L199.6 170.4L197.4 166.6L199.0 166.9L200.6 169.3L201.2 173.2ZM391.0 253.1L393.9 253.2L393.9 254.9L392.4 257.0L390.7 257.0L390.5 254.9ZM431.7 180.7L434.3 181.5L433.9 183.9L430.9 185.7L429.9 184.3L430.5 182.4ZM389.5 152.9L388.0 150.6L389.5 149.1L392.4 150.6L391.7 152.5ZM395.7 150.6L394.7 146.9L396.1 146.4L397.3 149.4Z" fill="#fff"/><path d="M134.9 127.8L134.9 152.2M161.3 176.3L202.7 176.3L211.1 178.3M170.3 205.4L173.8 205.0L179.3 207.3L186.0 206.5L188.9 210.1L191.9 209.7L195.2 212.5L199.7 215.8" fill="none" stroke="#c9d9df" stroke-width="0.600"/></svg><span id="t34" class="t" style="left:455.0px;top:379.5px;font-size:29.5px;line-height:41px;color:#0a0a0a;font-weight:400;letter-spacing:-0.562px;">Our</span><span id="t35" class="t" style="left:511.3px;top:379.5px;font-size:29.5px;line-height:41px;color:#0a0a0a;font-weight:400;letter-spacing:-0.217px;">Liaison Offices</span><span id="t36" class="t" style="left:709.5px;top:379.5px;font-size:29.5px;line-height:41px;color:#0a0a0a;font-weight:400;letter-spacing:-0.251px;">in 4 Countries</span><div class="abs" style="left:511.3px;top:413.0px;width:189.7px;height:2.0px;background:#0a0a0a"></div><div class="abs" style="left:783.6px;top:526.2px;width:10.4px;height:11.1px;background:#ccfa1e"></div><div class="abs" style="left:833.2px;top:548.3px;width:10.6px;height:10.6px;background:#0d4b5e"></div><div class="abs" style="left:814.6px;top:569.3px;width:10.6px;height:10.4px;background:#0d4b5e"></div><div class="abs" style="left:881.3px;top:573.3px;width:10.7px;height:10.6px;background:#0d4b5e"></div><div class="abs" style="left:699.9px;top:646.8px;width:10.4px;height:10.7px;background:#0d4b5e"></div><span id="t37" class="t" style="left:783.4px;top:504.0px;font-size:14.4px;line-height:20px;color:#101010;font-weight:400;letter-spacing:0.010px;">Freie Universität Berlin</span><span id="t38" class="t" style="left:849.7px;top:543.5px;font-size:14.4px;line-height:20px;color:#101010;font-weight:400;letter-spacing:-0.112px;">Tbilisi</span><span id="t39" class="t" style="left:775.6px;top:565.0px;font-size:14.4px;line-height:20px;color:#101010;font-weight:400;letter-spacing:-0.241px;">Cairo</span><span id="t40" class="t" style="left:896.7px;top:569.2px;font-size:14.4px;line-height:20px;color:#101010;font-weight:400;letter-spacing:-0.033px;">New Delhi</span><span id="t41" class="t" style="left:714.7px;top:643.0px;font-size:14.4px;line-height:20px;color:#101010;font-weight:400;letter-spacing:0.009px;">Sao Paulo</span><div class="abs" style="left:428.3px;top:729.0px;width:16.4px;height:17.2px;background:#c8f520"></div><svg style="left:432.5px;top:733.5px;" width="8" height="9" viewBox="0 0 8 9"><path d="M2.500 2h4v1.600h-4zM2.500 2v3M1 5.500h1.600v1.600H1zM5 5.200h1.400v1.300H5z" fill="#222" stroke="#222" stroke-width="0.500"/></svg><span id="t42" class="t" style="left:455.0px;top:732.3px;font-size:7.4px;line-height:10px;color:#222;font-weight:400;letter-spacing:-0.065px;">Tobias A. Stüdemann | Verbindungsbüro Osteuropa | Liaison Office Eastern Europe</span><div class="abs" style="left:-6.0px;top:513.5px;width:346.3px;height:258.0px;border-radius:9px;background:#000;border:1px solid #2c2c2c"></div><div class="abs" style="left:7.9px;top:525.7px;width:319.7px;height:232.9px;border-radius:9px;background:#1f1f1f"></div><span id="t43" class="t" style="left:32.4px;top:545.0px;font-size:14px;line-height:20px;color:#b4b4b4;font-weight:400;letter-spacing:0.244px;">Мой язык перевода</span><div class="abs" style="left:19.7px;top:578.2px;width:296.2px;height:31.6px;border-radius:7px;border:1px solid #8c8c8c"></div><span id="t44" class="t" style="left:33.0px;top:585.9px;font-size:14px;line-height:20px;color:#ffffff;font-weight:400;letter-spacing:0.339px;-webkit-text-stroke:0.070px #fff;">Українська</span><svg style="left:292.5px;top:589.5px;" width="14" height="9" viewBox="0 0 14 9"><path d="M1.200 1.500L7 7.300l5.800-5.800" fill="none" stroke="#e8e8e8" stroke-width="1.400"/></svg><div class="abs" style="left:19.7px;top:633.8px;width:296.2px;height:1.1px;background:#5a5a5a"></div><span id="t45" class="t" style="left:32.4px;top:641.6px;font-size:14px;line-height:20px;color:#b4b4b4;font-weight:400;letter-spacing:0.229px;">Сбалансировать громкость</span><div class="abs" style="left:19.7px;top:678.5px;width:280.3px;height:8.6px;border-radius:4.300px;background:#5aaaf2"></div><div class="abs" style="left:288.2px;top:666.7px;width:32.0px;height:32.0px;border-radius:50%;background:radial-gradient(circle,#141414 0,#141414 10.800px,#8a8a8a 11.200px,#8a8a8a 12px,#0a0a0a 12.400px,#0a0a0a 13.300px,#5fb0f5 13.700px,#4f9be6 15px,#2f5f94 16px)"></div><span id="t46" class="t" style="left:19.7px;top:700.7px;font-size:16px;line-height:22px;color:#ffffff;font-weight:400;letter-spacing:0.454px;-webkit-text-stroke:0.120px currentColor;">Исходное аудио</span><span id="t47" class="t" style="left:19.7px;top:724.4px;font-size:16px;line-height:22px;color:#ffffff;font-weight:400;letter-spacing:0.533px;-webkit-text-stroke:0.120px currentColor;">(выступающий)</span><span id="t48" class="t" style="left:236.4px;top:700.7px;font-size:16px;line-height:22px;color:#ffffff;font-weight:400;letter-spacing:0.222px;-webkit-text-stroke:0.120px currentColor;">Переводчик</span><div class="abs" style="left:7.0px;top:775.7px;width:40.0px;height:40.0px;border-radius:50%;border:1px solid #8e8e8e"></div><svg style="left:17.3px;top:787.8px;" width="20" height="18" viewBox="0 0 20 18"><path d="M3 1h14a2 2 0 0 1 2 2v9a2 2 0 0 1-2 2H7.500L3.200 17.200V14H3a2 2 0 0 1-2-2V3a2 2 0 0 1 2-2z" fill="none" stroke="#e6e6e6" stroke-width="1.400" stroke-linejoin="round"/><text x="10" y="10.900" font-size="8.800" font-weight="700" fill="#e6e6e6" text-anchor="middle" font-family="Liberation Sans, sans-serif" letter-spacing="-0.300">CC</text></svg><svg style="left:65.5px;top:786.5px;" width="19" height="19" viewBox="0 0 19 19"><g fill="none" stroke="#e0e0e0" stroke-width="1.250"><circle cx="9.500" cy="9.500" r="8.600"/><ellipse cx="9.500" cy="9.500" rx="4" ry="8.600"/><path d="M9.500 0.900v17.200M1.300 7h16.400M1.300 12h16.400"/></g></svg><div class="abs" style="left:308.6px;top:776.0px;width:272.6px;height:39.5px;border-radius:20px;border:1px solid #8e8e8e"></div><div class="abs" style="left:541.2px;top:776.5px;width:1.0px;height:38.5px;background:#5e5e5e"></div><svg style="left:327.4px;top:787.0px;" width="17" height="18.5" viewBox="0 0 17 18.5"><g fill="none" stroke="#e8808c" stroke-width="1.350" stroke-linecap="round"><rect x="5.600" y="1" width="6" height="10.500" rx="3"/><path d="M3.200 9.600c.400 3 2.600 4.700 5.400 4.700s5-1.700 5.400-4.700M8.600 14.300v3M4.200 17.600h8.800M1 0.800l14.500 16.400"/></g></svg><span id="t49" class="t" style="left:360.6px;top:785.4px;font-size:16px;line-height:22px;color:#ffffff;font-weight:400;letter-spacing:0.337px;-webkit-text-stroke:0.120px currentColor;">Включить микрофон</span><div class="abs" style="left:526.5px;top:775.5px;width:15.0px;height:15.0px;border-radius:50%;background:#2a1a0a"></div><svg style="left:528.5px;top:777.5px;" width="11" height="10.5" viewBox="0 0 11 10.5"><path d="M5.500 0.800L10.400 9.600H0.600z" fill="#f0a030" stroke="#f0a030" stroke-width="1" stroke-linejoin="round"/><path d="M5.500 3.600v3" stroke="#2a1a0a" stroke-width="1.200"/><circle cx="5.500" cy="8" r="0.700" fill="#2a1a0a"/></svg><svg style="left:551.5px;top:791.0px;" width="17" height="10" viewBox="0 0 17 10"><path d="M1 1l7.500 7.500L16 1" fill="none" stroke="#fff" stroke-width="1.500"/></svg><div class="abs" style="left:589.2px;top:776.0px;width:242.6px;height:39.5px;border-radius:20px;border:1px solid #8e8e8e"></div><div class="abs" style="left:792.0px;top:776.5px;width:1.0px;height:38.5px;background:#5e5e5e"></div><svg style="left:606.5px;top:787.5px;" width="19" height="16.5" viewBox="0 0 19 16.5"><g fill="none" stroke="#e8808c" stroke-width="1.350" stroke-linejoin="round" stroke-linecap="round"><path d="M2.800 2.300h8.700a1.800 1.800 0 0 1 1.800 1.800v8.300a1.800 1.800 0 0 1-1.800 1.800H2.800A1.800 1.800 0 0 1 1 12.400V4.100a1.800 1.800 0 0 1 1.800-1.800zM13.300 6.700l4.500-2.600v8.300l-4.500-2.600M1.500 0.800l15 15"/></g></svg><span id="t50" class="t" style="left:640.7px;top:785.4px;font-size:16px;line-height:22px;color:#ffffff;font-weight:400;letter-spacing:0.280px;-webkit-text-stroke:0.120px currentColor;">Запустить видео</span><svg style="left:802.6px;top:791.0px;" width="17" height="10" viewBox="0 0 17 10"><path d="M1 1l7.500 7.500L16 1" fill="none" stroke="#fff" stroke-width="1.500"/></svg><div class="abs" style="left:840.2px;top:776.0px;width:218.6px;height:39.5px;border-radius:20px;border:1px solid #8e8e8e"></div><svg style="left:857.8px;top:788.8px;" width="18" height="14" viewBox="0 0 18 14"><rect x="0.800" y="0.800" width="16.400" height="12.400" rx="2.600" fill="none" stroke="#f0f0f0" stroke-width="1.400"/><path d="M9 10.500V4M6.200 6.600L9 3.800l2.800 2.800" fill="none" stroke="#f0f0f0" stroke-width="1.400"/></svg><span id="t51" class="t" style="left:885.5px;top:785.4px;font-size:16px;line-height:22px;color:#ffffff;font-weight:400;letter-spacing:0.492px;-webkit-text-stroke:0.120px currentColor;">Совместный доступ</span><div class="abs" style="left:1067.0px;top:775.7px;width:82.0px;height:39.8px;border-radius:20px;border:1px solid #8e8e8e"></div><svg style="left:1082.0px;top:788.0px;" width="12" height="18.5" viewBox="0 0 12 18.5"><path d="M3.200 9V3.600a1.100 1.100 0 0 1 2.200 0V2.200a1.100 1.100 0 0 1 2.200 0v1a1.100 1.100 0 0 1 2.200 0V7.500a1.100 1.100 0 0 1 1.500 1v4.300c0 3-2 5-5 5s-5.300-1.800-5.300-5V9.600a1.100 1.100 0 0 1 2.200-.300z" fill="none" stroke="#e0e0e0" stroke-width="1.150" stroke-linejoin="round"/><path d="M3.400 3.300h6v4.500h-6z" fill="#9a9a9a" opacity=".850"/><path d="M7.800 9.500c-1.300.600-2 1.700-2.100 3" fill="none" stroke="#e0e0e0" stroke-width="1.100"/></svg><div class="abs" style="left:1108.2px;top:786.0px;width:1.1px;height:22.0px;background:#7a7a7a"></div><svg style="left:1117.8px;top:786.0px;" width="21" height="21" viewBox="0 0 21 21"><g fill="none" stroke="#e0e0e0" stroke-width="1.250" stroke-linecap="round"><path d="M17.900 8.300a8.400 8.400 0 1 1-5.700-5.500"/><path d="M6 12.300c1 2 2.400 2.900 4 2.900s3-.900 4-2.900"/><path d="M15.800 1.500v5.400M13.100 4.200h5.400"/></g><circle cx="7.300" cy="8.800" r="1" fill="#e0e0e0"/><circle cx="12.700" cy="8.800" r="1" fill="#e0e0e0"/></svg><div class="abs" style="left:1157.0px;top:775.7px;width:40.0px;height:40.0px;border-radius:50%;border:1px solid #8e8e8e"></div><div class="abs" style="left:1171.2px;top:795.0px;width:1.8px;height:1.8px;background:#f0f0f0"></div><div class="abs" style="left:1176.2px;top:795.0px;width:1.8px;height:1.8px;background:#f0f0f0"></div><div class="abs" style="left:1181.2px;top:795.0px;width:1.8px;height:1.8px;background:#f0f0f0"></div><div class="abs" style="left:1205.0px;top:775.8px;width:40.0px;height:40.0px;border-radius:50%;background:#e5202f"></div><svg style="left:1218.5px;top:789.5px;" width="13" height="13" viewBox="0 0 13 13"><path d="M1 1l11 11M12 1L1 12" stroke="#fff" stroke-width="1.300"/></svg><svg style="left:1422.0px;top:787.5px;" width="19" height="18.5" viewBox="0 0 19 18.5"><g fill="none" stroke="#e6e6e6" stroke-width="1.300" stroke-linecap="round"><circle cx="7.800" cy="4.300" r="3.500"/><path d="M9.500 17H3.500C0.500 17 0.300 14.500 1.500 12.600 2.800 10.500 5 9.400 7.800 9.400c.800 0 1.600.100 2.300.300"/><path d="M11.300 11.500h6.500M11.300 14.200h6.500M11.300 16.900h6.500"/></g></svg><svg style="left:1466.0px;top:787.5px;" width="18" height="17.5" viewBox="0 0 18 17.5"><path d="M9.300 1a7.600 7.600 0 1 1-3.900 14.100L1.300 16.300l1.300-3.600A7.600 7.600 0 0 1 9.300 1z" fill="none" stroke="#e6e6e6" stroke-width="1.350" stroke-linejoin="round"/></svg><div class="abs" style="left:1487.2px;top:776.2px;width:11.6px;height:11.6px;border-radius:50%;background:#2a7de1"></div><div class="abs" style="left:1521.2px;top:795.2px;width:1.8px;height:1.8px;background:#e0e0e0"></div><div class="abs" style="left:1526.2px;top:795.2px;width:1.8px;height:1.8px;background:#e0e0e0"></div><div class="abs" style="left:1531.2px;top:795.2px;width:1.8px;height:1.8px;background:#e0e0e0"></div><svg style="left:326.5px;top:704.3px;" width="12" height="18.5" viewBox="0 0 12 18.5"><path d="M1 1v14.200l3.400-3.200 2.400 5.500 2.300-1-2.400-5.300H11.200z" fill="#fff" stroke="#000" stroke-width="1" stroke-linejoin="round"/></svg><div class="abs" style="left:0.0px;top:815.9px;width:1574.0px;height:10.1px;background:#1d2c43"></div><div class="abs" style="left:1571.5px;top:816.5px;width:1.0px;height:9.5px;background:#66759a"></div><div class="abs" style="left:0.0px;top:815.8px;width:13.0px;height:10.2px;background:#213a4c"></div><div class="abs" style="left:0.0px;top:820.5px;width:2.5px;height:5.5px;background:#fff"></div><div class="abs" style="left:13.0px;top:816.6px;width:257.0px;height:9.4px;background:#f2f2f2"></div><div class="abs" style="left:30.0px;top:823.0px;width:11.0px;height:7.0px;border-radius:50%;border:1.500px solid #222"></div><div class="abs" style="left:230.0px;top:824.0px;width:7.0px;height:2.0px;background:#e8b040"></div><div class="abs" style="left:244.0px;top:824.0px;width:3.0px;height:2.0px;background:#d86a4a"></div><div class="abs" style="left:322.0px;top:822.5px;width:8.0px;height:3.5px;background:#e8b040;border-radius:3px 3px 0 0"></div><div class="abs" style="left:356.0px;top:822.5px;width:16.0px;height:3.5px;background:#3a7ac8;border-radius:3px 3px 0 0"></div><div class="abs" style="left:436.0px;top:822.5px;width:14.0px;height:3.5px;background:#22b8d8;border-radius:3px 3px 0 0"></div><div class="abs" style="left:470.0px;top:822.5px;width:14.0px;height:3.5px;background:#c8d0e8;border-radius:3px 3px 0 0"></div><div class="abs" style="left:506.0px;top:822.5px;width:14.0px;height:3.5px;background:#2aa860;border-radius:3px 3px 0 0"></div><div class="abs" style="left:542.0px;top:822.5px;width:16.0px;height:3.5px;background:#d8dce8;border-radius:3px 3px 0 0"></div><div class="abs" style="left:580.0px;top:822.5px;width:12.0px;height:3.5px;background:#e89040;border-radius:3px 3px 0 0"></div><div class="abs" style="left:616.0px;top:822.5px;width:14.0px;height:3.5px;background:#c8d4e8;border-radius:3px 3px 0 0"></div><div class="abs" style="left:654.0px;top:822.5px;width:14.0px;height:3.5px;background:#d83a30;border-radius:3px 3px 0 0"></div><div class="abs" style="left:690.0px;top:822.5px;width:14.0px;height:3.5px;background:#b8d8a0;border-radius:3px 3px 0 0"></div><div class="abs" style="left:728.0px;top:822.5px;width:14.0px;height:3.5px;background:#d0d4dc;border-radius:3px 3px 0 0"></div><div class="abs" style="left:762.0px;top:822.5px;width:16.0px;height:3.5px;background:#3a50c0;border-radius:3px 3px 0 0"></div><div class="abs" style="left:795.0px;top:822.5px;width:12.0px;height:3.5px;background:#2aa0d8;border-radius:3px 3px 0 0"></div><div class="abs" style="left:838.0px;top:822.5px;width:12.0px;height:3.5px;background:#e0e0e0;border-radius:3px 3px 0 0"></div><div class="abs" style="left:865.0px;top:815.8px;width:38.0px;height:10.2px;background:#33435c"></div><div class="abs" style="left:903.0px;top:815.8px;width:37.0px;height:10.2px;background:#2c3b52"></div><div class="abs" style="left:875.0px;top:822.0px;width:19.0px;height:6.0px;border-radius:50%;border:2px solid #8a70e0"></div><div class="abs" style="left:912.0px;top:821.5px;width:18.0px;height:8.5px;border-radius:50%;background:#d83a30"></div><div class="abs" style="left:1328.0px;top:823.5px;width:14.0px;height:2.5px;background:#e8e8e8"></div><div class="abs" style="left:1401.0px;top:822.5px;width:12.0px;height:3.5px;background:#3a4a60"></div><div class="abs" style="left:1422.0px;top:823.5px;width:3.0px;height:2.5px;background:#e8e8e8"></div><div class="abs" style="left:1436.0px;top:823.5px;width:2.0px;height:2.5px;background:#e8e8e8"></div><div class="abs" style="left:1442.0px;top:823.5px;width:2.0px;height:2.5px;background:#e8e8e8"></div><div class="abs" style="left:1535.7px;top:822.3px;width:16.3px;height:3.7px;background:#f4f4f4"></div></div></body></html>
